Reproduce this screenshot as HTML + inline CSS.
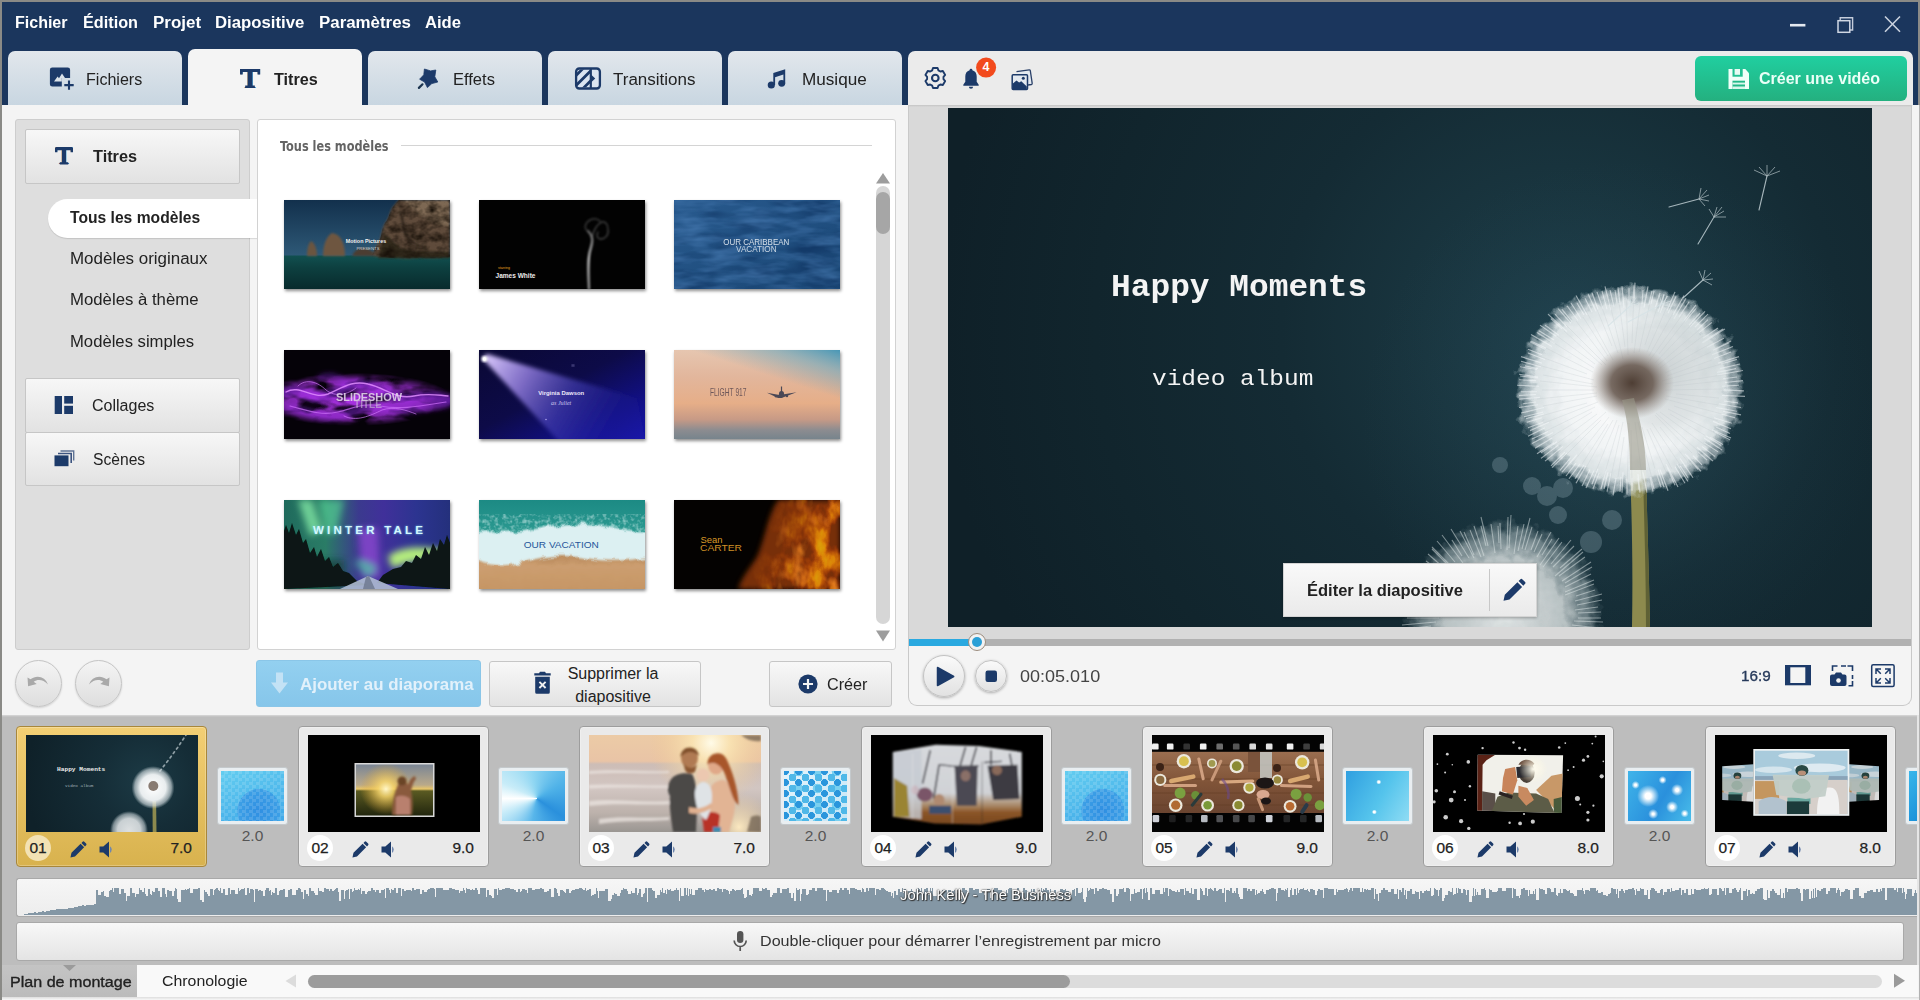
<!DOCTYPE html>
<html lang="fr">
<head>
<meta charset="utf-8">
<title>Diaporama</title>
<style>
*{box-sizing:border-box;margin:0;padding:0}
html,body{width:1920px;height:1000px;overflow:hidden}
body{font-family:"Liberation Sans","DejaVu Sans",sans-serif;color:#222;background:#f4f4f4;position:relative}
.abs{position:absolute}
#titlebar{position:absolute;left:0;top:0;width:1920px;height:105px;background:#1b365d}
#edgeL{position:absolute;left:0;top:0;width:1.600px;height:1000px;background:#8a8a86;z-index:50}
#edgeT{position:absolute;left:0;top:0;width:1920px;height:1.500px;background:#8a8a86;z-index:50}
.menu{position:absolute;top:13px;color:#fff;font-weight:bold;font-size:16px;line-height:20px;white-space:nowrap}
.tab{position:absolute;top:51px;height:54px;width:174px;border-radius:7px 7px 0 0;background:linear-gradient(#e2e7ec,#c8d6e1);font-size:16px;color:#222}
.tab.active{top:49px;height:57px;background:#f4f4f4}
.tab span{position:absolute;top:19px;line-height:20px;white-space:nowrap}
.tab.active span{top:21px}
.tab svg{position:absolute}
#main{position:absolute;left:2px;top:105px;width:1918px;height:610px;background:#f4f4f4}

.sbtn{position:absolute;left:25px;width:215px;border:1px solid #c6c6c6;background:linear-gradient(#f7f7f7,#e2e2e2);border-radius:2px;font-size:16px}
.sbtn span{position:absolute;line-height:20px;white-space:nowrap}
.sitem{position:absolute;left:70px;font-size:16px;line-height:20px;color:#222;white-space:nowrap}
.thumb{position:absolute;width:166px;height:89px;box-shadow:1px 2px 3px rgba(0,0,0,.45);overflow:hidden}
.thumb svg{position:absolute;left:0;top:0}
.btn{position:absolute;top:661px;height:46px;border:1px solid #c6c6c6;border-radius:3px;background:linear-gradient(#f8f8f8,#e3e3e3);font-size:16px;color:#222}

.card{position:absolute;top:726px;width:191px;height:141px;border:1px solid #9d9d9d;border-radius:4px;background:#eaeaea;box-shadow:0 0 0 1px rgba(255,255,255,.25) inset}
.card.sel{background:linear-gradient(#f3cf74,#d8b24e);border-color:#a8873a}
.card .th{position:absolute;left:9px;top:8px;width:172px;height:97px;overflow:hidden;background:#000}
.card .num{position:absolute;left:8px;top:108px;width:26px;height:26px;border-radius:50%;background:#fff;text-align:center;font-size:15.500px;line-height:26px;color:#222;-webkit-text-stroke:.25px #222}
.card.sel .num{background:#f3e2b4}
.card .dur{position:absolute;right:14px;top:111px;font-size:15.500px;line-height:20px;color:#222;-webkit-text-stroke:.25px #222}
.card svg.ic{position:absolute;left:50px;top:111px}
.tr{position:absolute;top:767px;width:71px;height:58px;border:1px solid #c4c9cc;border-radius:3px;background:#e9eef1}
.tr i{position:absolute;left:3px;top:3px;right:3px;bottom:3px;display:block}
.trl{position:absolute;top:826px;width:71px;text-align:center;font-size:15.500px;line-height:20px;color:#555}
</style>
</head>
<body>
<div id="titlebar"></div>
<div id="edgeL"></div><div id="edgeT"></div>

<!-- MENU -->
<div class="menu" style="left:15.0px;transform-origin:0 50%;transform:scaleX(1.001)" id="mn1">Fichier</div>
<div class="menu" style="left:82.5px;transform-origin:0 50%;transform:scaleX(1.014)" id="mn2">Édition</div>
<div class="menu" style="left:152.5px;transform-origin:0 50%;transform:scaleX(1.059)" id="mn3">Projet</div>
<div class="menu" style="left:215.0px;transform-origin:0 50%;transform:scaleX(1.046)" id="mn4">Diapositive</div>
<div class="menu" style="left:318.5px;transform-origin:0 50%;transform:scaleX(1.055)" id="mn5">Paramètres</div>
<div class="menu" style="left:424.5px;transform-origin:0 50%;transform:scaleX(1.038)" id="mn6">Aide</div>

<!-- TABS -->
<div class="tab" style="left:8px"><span id="tb1" style="left:78.3px;transform-origin:0 50%;transform:scaleX(1.004)">Fichiers</span></div>
<div class="tab active" style="left:188px"><span id="tb2" style="left:85.8px;font-weight:bold;transform-origin:0 50%;transform:scaleX(1.011)">Titres</span></div>
<div class="tab" style="left:368px"><span id="tb3" style="left:85.1px;transform-origin:0 50%;transform:scaleX(1.031)">Effets</span></div>
<div class="tab" style="left:548px"><span id="tb4" style="left:64.5px;transform-origin:0 50%;transform:scaleX(1.062)">Transitions</span></div>
<div class="tab" style="left:728px"><span id="tb5" style="left:73.5px;transform-origin:0 50%;transform:scaleX(1.071)">Musique</span></div>


<!-- TAB ICONS -->
<svg class="abs" style="left:48px;top:65px" width="28" height="27" viewBox="48 65 28 27">
 <path d="M52.3 67.4h15.4a2.4 2.4 0 0 1 2.4 2.4v8.2h-8.3v8.6h-9.5a2.4 2.4 0 0 1-2.4-2.4v-14.4a2.4 2.4 0 0 1 2.4-2.4z" fill="#1c3a69"/>
 <path d="M54 81.6l3.6-5 1.4 1.7 3-4.8 3 4.5h-3.2v3.6z" fill="#dbe3ea"/>
 <path d="M69 80.4v9.4M64.3 85.1h9.4" stroke="#1c3a69" stroke-width="2.1" fill="none"/>
</svg>
<div class="abs" id="tabT" style="left:239px;top:63px;width:22px;height:30px;font-family:'Liberation Serif',serif;font-weight:bold;font-size:29.5px;line-height:30px;color:#1c3a69;text-align:center">T</div>
<svg class="abs" style="left:415px;top:65px" width="28" height="27" viewBox="415 65 28 27">
 <path d="M424.4 69l6.2 1.9 5.2-.9-1 6.8 3 5.2-6 1.6-4.4 4-2.8-5.6-5-2.8 4.2-4.4z" fill="#1c3a69" stroke="#1c3a69" stroke-width="0.8" stroke-linejoin="round"/>
 <path d="M418.9 87.9l3.6-3.6" stroke="#1c3550" stroke-width="2.2" stroke-linecap="round"/>
</svg>
<svg class="abs" style="left:573px;top:65px" width="30" height="27" viewBox="573 65 30 27">
 <defs><clipPath id="trc"><rect x="577" y="69.5" width="13.5" height="18"/></clipPath></defs>
 <rect x="577" y="69.5" width="22" height="18" fill="#dbe5f1"/>
 <g clip-path="url(#trc)" stroke="#1c3a69" stroke-width="2.700">
  <path d="M574 77.500l10-10M574 87.500l20-20M582 89.500l12-12"/>
 </g>
 <path d="M590.8 69v19" stroke="#1c3a69" stroke-width="2.2"/>
 <path d="M591 74.5l4.2 4-4.2 4z" fill="#1c3a69"/>
 <rect x="576.1" y="68.5" width="23.8" height="20" rx="3.2" fill="none" stroke="#1c3a69" stroke-width="2.3"/>
</svg>
<svg class="abs" style="left:764px;top:66px" width="26" height="26" viewBox="764 66 26 26">
 <ellipse cx="771.3" cy="85.1" rx="3.6" ry="3.5" fill="#1c3a69"/>
 <ellipse cx="781.7" cy="83.3" rx="3.5" ry="3.4" fill="#1c3a69"/>
 <path d="M773.3 72.9l11.9-3.7v14h-1.8v-8.6l-8.3 2.6v7.9h-1.8z" fill="#1c3a69"/>
</svg>
<div id="main"></div>

<svg class="abs" style="left:238px;top:66px" width="24" height="24" viewBox="238 66 24 24"><path d="M240 69h20.2v5.4h-2.7v-2.3h-14.8v2.3h-2.7zM245.2 85.5h9.6v2.5h-9.6zM247.6 70h4.8v17h-4.8z" fill="#1c3a69"/></svg>
<!-- WINDOW CONTROLS -->
<svg class="abs" style="left:1780px;top:10px" width="130" height="30" viewBox="1780 10 130 30">
 <path d="M1790 25.2h15.4" stroke="#e4e9f0" stroke-width="2.6"/>
 <path d="M1840.2 20.4v-2.6h12.4v12.2h-2.6" stroke="#c4ccdb" stroke-width="1.4" fill="none"/>
 <rect x="1838" y="20.7" width="11.8" height="11.6" fill="none" stroke="#d0d7e3" stroke-width="1.5"/>
 <path d="M1885 16.5l15 15.2M1900 16.5l-15 15.2" stroke="#c9d1de" stroke-width="1.6"/>
</svg>
<div class="abs" style="left:1918.200px;top:0;width:1.800px;height:105px;background:#8b8b88;z-index:50"></div><div class="abs" style="left:1918.600px;top:105px;width:1.400px;height:895px;background:#b2b2b2;z-index:50"></div>

<!-- RIGHT TOP PANEL -->
<div class="abs" style="left:908px;top:51px;width:1005px;height:55px;background:#ebebeb;border-radius:7px 7px 0 0"></div>
<svg class="abs" style="left:922px;top:55px" width="120" height="40" viewBox="922 55 120 40">
 <g transform="translate(935.3 78)" fill="none" stroke="#1c3a69" stroke-width="2.1" stroke-linejoin="round">
  <path id="gearp" d="M-2.6 -9.9h5.2l.9 2.7 2.2 1.3 2.8-.6 2.6 4.5-1.9 2.1v2.6l1.9 2.1-2.6 4.5-2.8-.6-2.2 1.3-.9 2.7h-5.2l-.9-2.7-2.2-1.3-2.8.6-2.6-4.5 1.9-2.1v-2.6l-1.9-2.1 2.6-4.5 2.8.6 2.2-1.3z" transform="scale(.89) translate(0 -1.4)"/>
  <circle cx="0" cy="0" r="3.300"/>
 </g>
 <path d="M969.6 70.2a1.4 1.4 0 0 1 2.8 0c3 .8 4.300 3.300 4.300 6.300v5.200l2 3.100v.9h-15.400v-.9l2-3.100v-5.200c0-3 1.300-5.500 4.300-6.300zM968.900 86.700h4.200a2.100 2.100 0 0 1-4.200 0z" fill="#1c3a69"/>
 <circle cx="986.1" cy="67.600" r="10" fill="#f24a1d"/>
 <g>
  <path d="M1016.500 71.600l12.700-1.800a1 1 0 0 1 1.100.8l1.900 12.800a1 1 0 0 1-.8 1.100l-3.300.500" fill="#e3e9f0" stroke="#2a4068" stroke-width="1.300"/>
  <rect x="1012.200" y="74.800" width="15.300" height="14.800" rx="1" fill="#e3e9f0" stroke="#1c3a69" stroke-width="1.500"/>
  <path d="M1012.900 83.500l3.600-3.100 2.600 2.200 2.200-1.400 5.500 5.200v2.500h-13.900z" fill="#1c3a69"/>
  <circle cx="1023.300" cy="78.200" r="1.500" fill="#1c3a69"/>
 </g>
</svg>
<div class="abs" style="left:976px;top:58px;width:20px;height:19px;line-height:19px;text-align:center;color:#fff;font-weight:bold;font-size:12.500px">4</div>
<div class="abs" style="left:1695px;top:56px;width:212px;height:45px;border-radius:6px;background:linear-gradient(#20cfa0,#24b07f)"></div>
<svg class="abs" style="left:1726px;top:66px" width="26" height="26" viewBox="1726 66 26 26">
 <path d="M1728.500 69h16.800l3.700 4.300v15.700h-20.500z" fill="#f0fff9"/>
 <rect x="1732.500" y="69" width="10.200" height="7.700" fill="#22c193"/>
 <rect x="1734.600" y="69" width="5.400" height="5.800" fill="#e8fbf4"/>
 <rect x="1732.500" y="80.700" width="12.500" height="8.300" fill="#22b888"/>
 <rect x="1732.500" y="82.600" width="12.500" height="1.900" fill="#d8f7ec"/>
 <rect x="1732.500" y="86.500" width="12.500" height="2.500" fill="#d8f7ec"/>
</svg>
<div class="abs" id="creer" style="left:1759.0px;top:69px;line-height:20px;font-size:16px;font-weight:bold;color:#eafff7;white-space:nowrap;transform-origin:0 50%;transform:scaleX(1.001)">Créer une vidéo</div>

<!-- LEFT SIDEBAR -->
<div class="abs" style="left:15px;top:119px;width:235px;height:531px;background:#dedede;border:1px solid #cdcdcd;border-radius:3px"></div>
<div class="sbtn" style="top:129px;height:55px"><span style="left:66.5px;top:17px;font-weight:bold;transform-origin:0 50%;transform:scaleX(1.017)" id="sb1">Titres</span></div>
<div class="abs" style="left:53px;top:142px;width:22px;height:28px;font-family:'Liberation Serif',serif;font-weight:bold;font-size:26px;line-height:28px;color:#1c3a69;text-align:center">T</div>
<svg class="abs" style="left:53px;top:145px" width="22" height="22" viewBox="53 145 22 22"><path d="M55 147.400h18v4.800h-2.400v-2h-13.200v2h-2.400zM59.800 162.200h8.400v2.300h-8.400zM61.900 148h4.200v15.500h-4.200z" fill="#1c3a69"/></svg>
<div class="abs" style="left:48px;top:199px;width:212px;height:39px;background:#fff;border-radius:19.500px 0 0 19.500px;box-shadow:0 1px 1px rgba(0,0,0,.12)"></div>
<div class="sitem" style="top:208px;font-weight:bold;z-index:3;left:70.0px;transform-origin:0 50%;transform:scaleX(0.978)" id="si1">Tous les modèles</div>
<div class="sitem" style="top:249px;left:70.0px;transform-origin:0 50%;transform:scaleX(1.059)" id="si2">Modèles originaux</div>
<div class="sitem" style="top:290px;left:70.0px;transform-origin:0 50%;transform:scaleX(1.047)" id="si3">Modèles à thème</div>
<div class="sitem" style="top:331.500px;left:70.0px;transform-origin:0 50%;transform:scaleX(1.041)" id="si4">Modèles simples</div>
<div class="sbtn" style="top:378px;height:55px"><span style="left:66.0px;top:17px;transform-origin:0 50%;transform:scaleX(1.001)" id="sb2">Collages</span></div>
<div class="sbtn" style="top:432px;height:54px"><span style="left:67.1px;top:17px;transform-origin:0 50%;transform:scaleX(0.978)" id="sb3">Scènes</span></div>
<svg class="abs" style="left:52px;top:394px" width="24" height="22" viewBox="52 394 24 22">
 <rect x="54.700" y="396" width="7.300" height="18" fill="#1c3a69"/><rect x="64.200" y="396" width="8.800" height="7.600" fill="#1c3a69"/><rect x="64.200" y="405.800" width="8.800" height="8.200" fill="#1c3a69"/>
</svg>
<svg class="abs" style="left:52px;top:448px" width="24" height="22" viewBox="52 448 24 22">
 <path d="M60.500 451h13.200v9.500" fill="none" stroke="#5f7395" stroke-width="1.400"/>
 <path d="M58 453.500h13.200v9.500" fill="none" stroke="#3c5480" stroke-width="1.600"/>
 <rect x="54.500" y="455.400" width="14" height="10.800" fill="#1c3a69"/>
</svg>
<!-- undo redo -->
<div class="abs" style="left:15px;top:660px;width:47px;height:47px;border-radius:50%;border:1px solid #c4c4c4;background:linear-gradient(#f4f4f4,#dedede);box-shadow:0 1px 2px rgba(0,0,0,.15)"></div>
<div class="abs" style="left:75px;top:660px;width:47px;height:47px;border-radius:50%;border:1px solid #c4c4c4;background:linear-gradient(#f4f4f4,#dedede);box-shadow:0 1px 2px rgba(0,0,0,.15)"></div>
<svg class="abs" style="left:15px;top:660px" width="110" height="48" viewBox="15 660 110 48">
 <path d="M27.500 677.500l.6 8.800 8.600-2.300-3-2.300c4-2.800 9.500-2.400 14.300 2.800-2.300-7.400-11-10.500-17.500-5.200z" fill="#a9a9a9"/>
 <path d="M109.500 677.500l-.6 8.800-8.600-2.300 3-2.300c-4-2.800-9.500-2.400-14.300 2.800 2.300-7.400 11-10.500 17.500-5.200z" fill="#a9a9a9"/>
</svg>

<!-- CONTENT PANEL -->
<div class="abs" style="left:257px;top:119px;width:639px;height:531px;background:#fff;border:1px solid #d2d2d2;border-radius:3px;z-index:2"></div>
<div class="abs" style="left:258px;top:199px;width:3px;height:39px;background:#fff;z-index:3"></div>
<div class="abs" id="hdr" style="z-index:4;left:279.5px;top:136px;line-height:20px;font-size:14.6px;font-weight:bold;color:#636363;white-space:nowrap;font-family:'DejaVu Sans Condensed','Liberation Sans',sans-serif;transform-origin:0 50%;transform:scaleX(0.863)">Tous les modèles</div>
<div class="abs" style="z-index:4;left:401px;top:145px;width:471px;height:1px;background:#d4d4d4"></div>
<!-- scrollbar -->
<div class="abs" style="z-index:4;left:876px;top:186px;width:14px;height:438px;border-radius:7px;background:#d6d6d6"></div>
<div class="abs" style="z-index:5;left:876px;top:192px;width:14px;height:42px;border-radius:7px;background:#a6a6a6"></div>
<svg class="abs" style="z-index:5;left:874px;top:170px" width="18" height="476" viewBox="874 170 18 476"><path d="M876 183.500h14l-7-10.500z" fill="#9d9d9d"/><path d="M876 630.500h14l-7 11z" fill="#9d9d9d"/></svg>
<div class="thumb" style="z-index:4;left:284px;top:200px"><svg width="166" height="89" viewBox="0 0 166 89"><defs><linearGradient id="t1s" x1="0" y1="0" x2="0" y2="1"><stop offset="0" stop-color="#12304c"/><stop offset="1" stop-color="#2f5a78"/></linearGradient><linearGradient id="t1w" x1="0" y1="0" x2="0" y2="1"><stop offset="0" stop-color="#115050"/><stop offset=".35" stop-color="#0d4040"/><stop offset="1" stop-color="#082a2c"/></linearGradient><filter id="b1"><feGaussianBlur stdDeviation=".8"/></filter><filter id="n1" color-interpolation-filters="sRGB" x="0" y="0" width="100%" height="100%"><feTurbulence type="fractalNoise" baseFrequency=".09 .12" numOctaves="3" seed="8"/><feColorMatrix values="0 0 0 0 .1  0 0 0 0 .07  0 0 0 0 .04  1.800 0 0 0 -.600"/><feComposite in2="SourceGraphic" operator="in"/></filter></defs>
<rect width="166" height="57" fill="url(#t1s)"/><rect y="55.500" width="166" height="34" fill="url(#t1w)"/>
<g filter="url(#b1)"><path id="rk1" d="M88 56c3-7 5-12 8-17 2-6 2-11 5-16 3-3 4-8 6-13 2-4 5-7 8-10h51v57c-10 2-20 1-30 1-16 1-32 0-48-2z" fill="#5e4c3b"/><path d="M120 0c6 8 12 10 18 16 8 6 16 8 28 10v-26z" fill="#7d6852"/><path d="M100 34c6 2 10 10 18 14 12 4 26 2 48 4v6h-72z" fill="#33291f"/><path d="M116 12c4 8 2 18 8 26 4 6 12 8 18 10" stroke="#2a2018" stroke-width="3" fill="none" opacity=".7"/>
<path d="M23 56c0-6 1-12 4-15 4 2 6 8 6 15z" fill="#6b543f"/><path d="M39 56c0-8 2-19 9-23 8 1 13 9 13 23z" fill="#6e5640"/><path d="M68 56c2-5 6-8 12-8 6 1 10 4 12 8z" fill="#4b3d31"/></g>
<use href="#rk1" filter="url(#n1)"/>
<text x="82" y="42.800" text-anchor="middle" font-family="Liberation Sans,sans-serif" font-weight="bold" font-size="5.400" fill="#f1f1f1">Motion Pictures</text><text x="84" y="49.500" text-anchor="middle" font-family="Liberation Sans,sans-serif" font-size="4.300" fill="#cfcfcf">PRESENTS</text></svg></div>
<div class="thumb" style="z-index:4;left:479px;top:200px"><svg width="166" height="89" viewBox="0 0 166 89"><defs><filter id="b2" x="-50%" y="-20%" width="200%" height="140%"><feGaussianBlur stdDeviation="1.100"/></filter><linearGradient id="sm2" x1="0" y1="1" x2="0" y2="0"><stop offset="0" stop-color="#d8d8d8" stop-opacity=".7"/><stop offset=".5" stop-color="#f0f0f0" stop-opacity=".9"/><stop offset="1" stop-color="#b0b0b0" stop-opacity=".6"/></linearGradient></defs><rect width="166" height="89" fill="#020202"/>
<g filter="url(#b2)" fill="none" stroke-linecap="round"><path d="M110 89c-.5-14-1.500-26 .5-36 1.500-7 3.500-10 2.500-15-.5-3-2-5-4-7" stroke="url(#sm2)" stroke-width="2.200"/><path d="M113 38c1-7 5-14 10-16 4-1 6 3 6 8 1 5-3 9-7 9-4 0-5-4-3-7" stroke="#8c8c8c" stroke-width="1.300" opacity=".5"/><path d="M107 30c-2-4 0-8 4-10 4-2 8-1 10 1" stroke="#5c5c5c" stroke-width="1.600" opacity=".6"/></g>
<text x="19" y="68.800" font-family="Liberation Sans,sans-serif" font-size="3.600" fill="#e6a020">starring</text><text x="16.500" y="77.800" font-family="Liberation Sans,sans-serif" font-weight="bold" font-size="6.600" fill="#ececec" textLength="40" lengthAdjust="spacingAndGlyphs">James White</text></svg></div>
<div class="thumb" style="z-index:4;left:674px;top:200px"><svg width="166" height="89" viewBox="0 0 166 89"><defs><filter id="w3" color-interpolation-filters="sRGB" x="0" y="0" width="100%" height="100%"><feTurbulence type="fractalNoise" baseFrequency=".03 .11" numOctaves="3" seed="5"/><feColorMatrix values="0 0 0 0 .3  0 0 0 0 .5  0 0 0 0 .72  0 0 0 -2.200 1.400"/></filter><filter id="w3b" color-interpolation-filters="sRGB" x="0" y="0" width="100%" height="100%"><feTurbulence type="fractalNoise" baseFrequency=".025 .09" numOctaves="2" seed="9"/><feColorMatrix values="0 0 0 0 .06  0 0 0 0 .2  0 0 0 0 .38  0 0 0 2.200 -.900"/></filter><linearGradient id="t3" x1="0" y1="0" x2="1" y2="1"><stop offset="0" stop-color="#285a8e"/><stop offset="1" stop-color="#1a4674"/></linearGradient></defs><rect width="166" height="89" fill="url(#t3)"/><rect width="166" height="89" filter="url(#w3b)" opacity=".7"/><rect width="166" height="89" filter="url(#w3)" opacity=".55"/>
<text x="82.300" y="44.500" text-anchor="middle" font-family="Liberation Sans,sans-serif" font-size="9.500" fill="#e4ebf2" opacity=".92" textLength="66" lengthAdjust="spacingAndGlyphs">OUR CARIBBEAN</text><text x="82.300" y="51.800" text-anchor="middle" font-family="Liberation Sans,sans-serif" font-size="9.500" fill="#e4ebf2" opacity=".85" textLength="40.500" lengthAdjust="spacingAndGlyphs">VACATION</text></svg></div>
<div class="thumb" style="z-index:4;left:284px;top:350px"><svg width="166" height="89" viewBox="0 0 166 89"><defs><filter id="b4" x="-10%" y="-30%" width="120%" height="160%"><feGaussianBlur stdDeviation="2.600"/></filter><filter id="b4b"><feGaussianBlur stdDeviation=".7"/></filter><filter id="n4" color-interpolation-filters="sRGB" x="0" y="0" width="100%" height="100%"><feTurbulence type="fractalNoise" baseFrequency=".035 .08" numOctaves="3" seed="21"/><feColorMatrix values="0 0 0 0 .68  0 0 0 0 .2  0 0 0 0 .92  0 3.400 0 0 -1.100"/><feComposite in2="SourceGraphic" operator="in"/></filter><radialGradient id="gm4" cx=".42" cy=".55" r=".6" gradientTransform="translate(0 .28) scale(1 .5)"><stop offset="0" stop-color="#fff"/><stop offset=".7" stop-color="#fff" stop-opacity=".7"/><stop offset="1" stop-color="#fff" stop-opacity="0"/></radialGradient></defs><rect width="166" height="89" fill="#050208"/>
<g fill="none" stroke-linecap="round" filter="url(#b4)"><path d="M0 44c14-10 26 8 44 2 14-6 24-14 40-10 18 4 28 16 46 12 14-3 24-2 36 2" stroke="#7a24c6" stroke-width="10" opacity=".75"/><path d="M4 58c16 2 30 10 48 8 16-2 30-12 46-8 20 4 40 0 64-4" stroke="#6a1fb0" stroke-width="8" opacity=".65"/><path d="M36 28c10-6 20 0 28 6" stroke="#6a22b8" stroke-width="5" opacity=".5"/></g>
<rect width="166" height="89" fill="url(#gm4)" filter="url(#n4)"/>
<g fill="none" stroke-linecap="round" filter="url(#b4b)"><path d="M2 42c14-8 26 8 42 2 14-6 24-14 40-10 18 4 28 16 46 12 14-3 22-1 34 0" stroke="#e08cff" stroke-width="1.400" opacity=".85"/><path d="M6 56c16 4 30 10 48 6 14-3 26-10 42-6 20 4 40 0 66-4" stroke="#c96cf5" stroke-width="1.200" opacity=".75"/><path d="M14 36c8-8 20-4 28 4 10 8 22 4 30-2M60 66c12 6 26 0 38-6 12-4 24 0 34 4" stroke="#d77cff" stroke-width="1" opacity=".65"/></g>
<text x="85" y="50.700" text-anchor="middle" font-family="Liberation Sans,sans-serif" font-weight="bold" font-size="11" fill="#e6dcec" opacity=".85" textLength="66" lengthAdjust="spacingAndGlyphs">SLIDESHOW</text><text x="84" y="58.400" text-anchor="middle" font-family="Liberation Sans,sans-serif" font-weight="bold" font-size="10" fill="#cdbfd6" opacity=".6" textLength="28" lengthAdjust="spacingAndGlyphs">TITLE</text></svg></div>
<div class="thumb" style="z-index:4;left:479px;top:350px"><svg width="166" height="89" viewBox="0 0 166 89"><defs><linearGradient id="t5" x1="0" y1="0" x2="1" y2="1"><stop offset="0" stop-color="#0a0834"/><stop offset=".45" stop-color="#0d0b48"/><stop offset=".8" stop-color="#12108a"/><stop offset="1" stop-color="#1513a8"/></linearGradient><linearGradient id="t5b" gradientUnits="userSpaceOnUse" x1="5" y1="9" x2="135" y2="85"><stop offset="0" stop-color="#dccbff" stop-opacity=".98"/><stop offset=".3" stop-color="#9a84e6" stop-opacity=".8"/><stop offset=".6" stop-color="#4c46c0" stop-opacity=".6"/><stop offset="1" stop-color="#2222a8" stop-opacity=".15"/></linearGradient><filter id="b5" x="-10%" y="-10%" width="120%" height="120%"><feGaussianBlur stdDeviation="2"/></filter><filter id="b5s"><feGaussianBlur stdDeviation=".8"/></filter></defs><rect width="166" height="89" fill="url(#t5)"/>
<path d="M3 8l5-4 150 44 10 50h-82z" fill="url(#t5b)" filter="url(#b5)"/><circle cx="5.500" cy="9" r="3" fill="#fff" filter="url(#b5s)"/><circle cx="5.500" cy="9" r="1.700" fill="#fff"/><circle cx="94" cy="15.500" r="1" fill="#b9b0ee" filter="url(#b5s)"/><circle cx="67" cy="69.500" r=".8" fill="#a9a0e8"/>
<text x="82.200" y="44.500" text-anchor="middle" font-family="Liberation Sans,sans-serif" font-weight="bold" font-size="5.200" fill="#ece8fa" textLength="46" lengthAdjust="spacingAndGlyphs">Virginia Dawson</text><text x="82.200" y="54.500" text-anchor="middle" font-family="Liberation Serif,serif" font-style="italic" font-size="6" fill="#cfc8f0">as Juliet</text></svg></div>
<div class="thumb" style="z-index:4;left:674px;top:350px"><svg width="166" height="89" viewBox="0 0 166 89"><defs><linearGradient id="t6" x1="0" y1="0" x2="0" y2="1"><stop offset="0" stop-color="#e6c6b0"/><stop offset=".3" stop-color="#e2b69c"/><stop offset=".6" stop-color="#e6ae88"/><stop offset=".78" stop-color="#c79a86"/><stop offset=".9" stop-color="#8c8c90"/><stop offset="1" stop-color="#77848c"/></linearGradient><linearGradient id="t6b" x1=".1" y1="1" x2="1" y2="0"><stop offset=".55" stop-color="#6fa3b8" stop-opacity="0"/><stop offset=".8" stop-color="#6aa6bc" stop-opacity=".6"/><stop offset="1" stop-color="#4496b6" stop-opacity=".98"/></linearGradient></defs><rect width="166" height="89" fill="url(#t6)"/><rect width="166" height="60" fill="url(#t6b)"/>
<text x="36" y="46.400" font-family="Liberation Sans,sans-serif" font-size="11.500" fill="#5a4850" opacity=".85" textLength="36.500" lengthAdjust="spacingAndGlyphs">FLIGHT 917</text>
<g fill="#4a4856"><path d="M93 42.800l12.500 2.200 17-2.800-15 5.800h-3.500z"/><ellipse cx="107.500" cy="44.300" rx="2.600" ry="3.200"/><path d="M106.900 36.500h1.200v6h-1.200z"/><circle cx="102" cy="46.300" r="1.200"/><circle cx="113" cy="46" r="1.200"/></g></svg></div>
<div class="thumb" style="z-index:4;left:284px;top:500px"><svg width="166" height="89" viewBox="0 0 166 89"><defs><linearGradient id="t7" x1="0" y1="0" x2="1" y2="0"><stop offset="0" stop-color="#1f6a5c"/><stop offset=".25" stop-color="#2a7c66"/><stop offset=".45" stop-color="#3b3a8e"/><stop offset=".6" stop-color="#40309a"/><stop offset=".8" stop-color="#2c3490"/><stop offset="1" stop-color="#24307c"/></linearGradient><filter id="b7" x="-20%" y="-20%" width="140%" height="140%"><feGaussianBlur stdDeviation="3.500"/></filter><filter id="b7b"><feGaussianBlur stdDeviation=".5"/></filter><filter id="b7t" x="-10%" y="-50%" width="120%" height="200%"><feGaussianBlur stdDeviation=".9"/></filter></defs><rect width="166" height="89" fill="url(#t7)"/>
<g filter="url(#b7)"><path d="M14 0l14 0 10 30-12 6z" fill="#7fe6a4" opacity=".8"/><path d="M34 0h26l-8 34h-10z" fill="#58d498" opacity=".65"/><path d="M74 28l20 0 2 50h-18z" fill="#8646cc" opacity=".85"/><path d="M104 56c14-10 34-10 56-6l-2 10c-18-2-34 2-50 8z" fill="#b8f27c" opacity=".98"/><path d="M70 62c8-4 16 0 24 6l-10 10z" fill="#4ad0a0" opacity=".7"/><path d="M0 60h60v29h-60z" fill="#123a34" opacity=".7"/></g>
<g fill="#081512" filter="url(#b7b)"><path d="M0 89v-58l2-6 3 8 3-10 4 12 3-6 4 14 3-4 4 14 4-6 3 10 4-8 4 12 4-4 4 10 5-4 5 8 6 2 8 8 10 4z"/><path d="M166 89v-46l-3-8-3 10-4-6-3 12-4-8-4 12-4-8-4 12-5-4-4 8-6-2-5 6-8 2-10 6-6 8z"/></g>
<path d="M56 89l28-13 30 13z" fill="#aebbd2" opacity=".9"/><path d="M82 77l3-1 6 13h-12z" fill="#5a6478" opacity=".6"/>
<text x="84" y="34" text-anchor="middle" font-family="Liberation Sans,sans-serif" font-weight="bold" font-size="11.500" fill="#7fd8f4" opacity=".8" textLength="110" lengthAdjust="spacing" filter="url(#b7t)">WINTER TALE</text><text x="84" y="34" text-anchor="middle" font-family="Liberation Sans,sans-serif" font-weight="bold" font-size="11.500" fill="#d4f8ff" textLength="110" lengthAdjust="spacing">WINTER TALE</text></svg></div>
<div class="thumb" style="z-index:4;left:479px;top:500px"><svg width="166" height="89" viewBox="0 0 166 89"><defs><linearGradient id="t8" x1="0" y1="0" x2="0" y2="1"><stop offset="0" stop-color="#1c8a84"/><stop offset="1" stop-color="#45b4a6"/></linearGradient><linearGradient id="t8s" x1="0" y1="0" x2="0" y2="1"><stop offset="0" stop-color="#b98a5c"/><stop offset=".25" stop-color="#cc9e70"/><stop offset="1" stop-color="#c49462"/></linearGradient><filter id="f8" x="-5%" y="-20%" width="110%" height="140%"><feTurbulence type="fractalNoise" baseFrequency=".09" numOctaves="2" seed="3"/><feDisplacementMap in="SourceGraphic" scale="8" xChannelSelector="R" yChannelSelector="G"/></filter><filter id="b8"><feGaussianBlur stdDeviation=".9"/></filter><filter id="n8" color-interpolation-filters="sRGB" x="0" y="0" width="100%" height="100%"><feTurbulence type="fractalNoise" baseFrequency=".25" numOctaves="2" seed="2"/><feColorMatrix values="0 0 0 0 .9  0 0 0 0 .97  0 0 0 0 .97  0 0 2.500 0 -1.100"/></filter></defs><rect width="166" height="89" fill="url(#t8)"/>
<rect y="14" width="166" height="24" filter="url(#n8)" opacity=".5"/>
<g filter="url(#f8)"><path d="M-10 36c20-8 40-2 60-6 24-4 40-8 60-6 22 2 40 10 66 8v60h-186z" fill="#dcf0f2" filter="url(#b8)"/><path d="M-10 58c18 8 34 10 54 4 22-6 40-8 62-4 20 4 42 4 70-2v40h-186z" fill="url(#t8s)" filter="url(#b8)"/></g>
<text x="82.300" y="47.800" text-anchor="middle" font-family="Liberation Sans,sans-serif" font-size="9.800" fill="#26569a" textLength="75" lengthAdjust="spacingAndGlyphs">OUR VACATION</text></svg></div>
<div class="thumb" style="z-index:4;left:674px;top:500px"><svg width="166" height="89" viewBox="0 0 166 89"><defs><filter id="n9" color-interpolation-filters="sRGB" x="0" y="0" width="100%" height="100%"><feTurbulence type="fractalNoise" baseFrequency=".045 .028" numOctaves="4" seed="14"/><feColorMatrix values="0 0 0 0 .86  .9 0 0 0 -.1  0 0 0 0 .03  3.400 0 0 0 -1.300"/><feComposite in2="SourceGraphic" operator="in"/></filter><filter id="n9b" color-interpolation-filters="sRGB" x="0" y="0" width="100%" height="100%"><feTurbulence type="fractalNoise" baseFrequency=".06 .035" numOctaves="3" seed="31"/><feColorMatrix values="0 0 0 0 .96  0 0 0 0 .55  0 0 0 0 .14  4 0 0 0 -2.200"/><feComposite in2="SourceGraphic" operator="in"/></filter><linearGradient id="m9" gradientUnits="userSpaceOnUse" x1="85" y1="45" x2="135" y2="65"><stop offset="0" stop-color="#fff" stop-opacity="0"/><stop offset=".5" stop-color="#fff" stop-opacity=".6"/><stop offset="1" stop-color="#fff"/></linearGradient><filter id="b9"><feGaussianBlur stdDeviation="2.500"/></filter></defs><rect width="166" height="89" fill="#040201"/>
<path d="M64 89c6-18 18-26 22-40 6-16 8-34 18-49h62v89z" fill="#a8420a" opacity=".7" filter="url(#b9)"/>
<rect x="50" width="116" height="89" fill="url(#m9)" filter="url(#n9)"/><rect x="50" width="116" height="89" fill="url(#m9)" filter="url(#n9b)" opacity=".8"/>
<text x="26.400" y="43" font-family="Liberation Sans,sans-serif" font-size="8.800" fill="#dc9c28" textLength="22" lengthAdjust="spacingAndGlyphs">Sean</text><text x="26" y="50.700" font-family="Liberation Sans,sans-serif" font-size="9.400" fill="#cf9026" textLength="42" lengthAdjust="spacingAndGlyphs">CARTER</text></svg></div>
<!-- buttons -->
<div class="abs" style="left:256px;top:660px;width:225px;height:47px;border-radius:3px;background:linear-gradient(#93d0f0,#86c6ea);border:1px solid #8ac6e8"></div>
<svg class="abs" style="left:268px;top:670px" width="24" height="28" viewBox="268 670 24 28"><path d="M276 672.500h7v10h5l-8.500 11-8.500-11h5z" fill="#c3e2f5"/></svg>
<div class="abs" id="ajout" style="left:300.4px;top:675px;line-height:20px;font-size:16px;font-weight:bold;color:#e2f1fb;white-space:nowrap;transform-origin:0 50%;transform:scaleX(1.055)">Ajouter au diaporama</div>
<div class="btn" style="left:489px;width:212px"></div>
<div class="abs" id="supp" style="left:548px;top:662px;width:130px;text-align:center;font-size:16px;line-height:23px;padding-top:0px;color:#222">Supprimer la diapositive</div>
<svg class="abs" style="left:532px;top:670px" width="22" height="26" viewBox="532 670 22 26">
 <path d="M535.200 676.800h14.600v15.500a1.500 1.500 0 0 1-1.500 1.500h-11.600a1.500 1.500 0 0 1-1.500-1.500zM534.300 673.200h4.700l1-1.400h5l1 1.400h4.700v2.200h-16.400z" fill="#1c3a69"/>
 <path d="M539.400 681.800l6.200 6.200M545.600 681.800l-6.200 6.200" stroke="#f0f0f0" stroke-width="1.900"/>
</svg>
<div class="btn" style="left:769px;width:123px"></div>
<svg class="abs" style="left:796px;top:672px" width="24" height="24" viewBox="796 672 24 24"><circle cx="808" cy="684" r="9.600" fill="#1c3a69"/><path d="M808 679v10M803 684h10" stroke="#f3f3f3" stroke-width="2.200"/></svg>
<div class="abs" id="creerb" style="left:827.0px;top:675px;line-height:20px;font-size:16px;color:#222;transform-origin:0 50%;transform:scaleX(1.012)">Créer</div>

<!-- PREVIEW PANEL -->
<div class="abs" style="left:908px;top:105px;width:1004px;height:601px;background:#f4f4f4;border:1px solid #c9c9c9;border-top:none;border-radius:0 0 9px 9px"></div>
<div class="abs" style="left:909px;top:105px;width:1002px;height:534px;background:#d9d9d9"></div>
<div class="abs" style="left:909px;top:105px;width:1002px;height:2px;background:linear-gradient(#c4c4c4,#d9d9d9)"></div>
<!-- video -->
<div class="abs" id="video" style="left:948px;top:108px;width:924px;height:519px;overflow:hidden;background:#16303b">
<svg width="924" height="519" viewBox="948 108 924 519" style="position:absolute;left:0;top:0">
 <defs>
  <radialGradient id="vbg" gradientUnits="userSpaceOnUse" cx="1560" cy="330" r="620">
   <stop offset="0" stop-color="#1d3d49"/><stop offset=".22" stop-color="#19353f"/><stop offset=".45" stop-color="#142b34"/><stop offset=".75" stop-color="#11252d"/><stop offset="1" stop-color="#0f2028"/>
  </radialGradient>
  <radialGradient id="puff" cx=".5" cy=".5" r=".5">
   <stop offset="0" stop-color="#fff"/><stop offset=".6" stop-color="#f7f9fa" stop-opacity=".97"/><stop offset=".84" stop-color="#edf2f3" stop-opacity=".9"/><stop offset=".95" stop-color="#d9e3e6" stop-opacity=".5"/><stop offset="1" stop-color="#c0d0d4" stop-opacity="0"/>
  </radialGradient>
  <radialGradient id="puff2" cx=".5" cy=".5" r=".5">
   <stop offset="0" stop-color="#e8ecec" stop-opacity=".95"/><stop offset=".6" stop-color="#d5dcdc" stop-opacity=".85"/><stop offset=".85" stop-color="#b8c6c8" stop-opacity=".5"/><stop offset="1" stop-color="#a8babd" stop-opacity="0"/>
  </radialGradient>
  <radialGradient id="core" cx=".5" cy=".5" r=".5">
   <stop offset="0" stop-color="#4e3e34"/><stop offset=".5" stop-color="#64544a" stop-opacity=".85"/><stop offset="1" stop-color="#8a7c74" stop-opacity="0"/>
  </radialGradient>
  <radialGradient id="shade" cx=".5" cy=".5" r=".5"><stop offset="0" stop-color="#9aa6a8" stop-opacity=".5"/><stop offset=".7" stop-color="#aab6b8" stop-opacity=".28"/><stop offset="1" stop-color="#c0cccc" stop-opacity="0"/></radialGradient><radialGradient id="glow" cx=".5" cy=".5" r=".5">
   <stop offset="0" stop-color="#4a7585" stop-opacity=".22"/><stop offset="1" stop-color="#2a5060" stop-opacity="0"/>
  </radialGradient>
  <filter id="fz" x="-20%" y="-20%" width="140%" height="140%"><feTurbulence type="fractalNoise" baseFrequency=".11" numOctaves="2" seed="4"/><feDisplacementMap in="SourceGraphic" scale="18" xChannelSelector="R" yChannelSelector="G"/></filter>
 </defs>
 <rect x="948" y="108" width="924" height="519" fill="url(#vbg)"/>
 <circle cx="1620" cy="420" r="260" fill="url(#glow)"/>
 <!-- bokeh -->
 <g fill="#9fb8c2" opacity=".28"><circle cx="1532" cy="486" r="9"/><circle cx="1547" cy="496" r="10"/><circle cx="1563" cy="488" r="10"/><circle cx="1558" cy="515" r="9"/><circle cx="1591" cy="542" r="11"/><circle cx="1612" cy="520" r="10"/><circle cx="1500" cy="465" r="8"/></g>
 <!-- stem -->
 <path d="M1630 470c2 50 3 100 2 157h18c-1-57-3-110-4-157z" fill="#8d8a4e"/>
 <path d="M1643 470c1 50 3 100 3 157h4c-1-57-3-110-4-157z" fill="#5f6135"/>
 <!-- main dandelion -->
 <g transform="translate(0 389) scale(1 .925) translate(0 -389)"> <g filter="url(#fz)"><circle cx="1630" cy="390" r="114" fill="url(#puff)"/></g>
 <path d="M1724 390L1744 391M1724 396L1745 397M1722 396L1745 397M1724 402L1738 404M1719 405L1741 409M1716 409L1737 413M1723 413L1741 417M1721 416L1735 420M1714 420L1732 426M1713 424L1731 432M1716 430L1730 437M1712 433L1731 442M1714 435L1730 444M1710 441L1723 449M1705 439L1721 450M1704 442L1722 455M1704 447L1718 457M1702 451L1715 462M1697 452L1713 467M1698 457L1707 466M1693 461L1702 471M1687 461L1701 478M1685 459L1698 476M1680 464L1693 485M1680 472L1688 485M1677 470L1688 489M1675 473L1685 491M1666 470L1678 495M1667 473L1675 493M1660 476L1668 499M1658 476L1664 495M1655 475L1661 495M1651 484L1654 497M1650 484L1653 500M1643 479L1647 501M1638 481L1640 501M1638 485L1639 498M1632 485L1632 499M1627 486L1627 503M1623 479L1622 501M1621 484L1620 500M1616 485L1613 504M1611 480L1607 500M1608 479L1604 497M1606 476L1601 497M1599 480L1593 497M1598 475L1592 492M1594 477L1586 496M1590 476L1582 494M1586 472L1576 491M1584 471L1575 486M1580 470L1569 486M1576 469L1566 483M1577 460L1562 479M1571 463L1560 477M1567 458L1552 474M1565 457L1551 472M1563 451L1545 467M1558 450L1541 464M1557 446L1541 458M1554 447L1537 459M1552 442L1535 453M1553 436L1532 448M1548 435L1532 443M1545 431L1528 440M1549 425L1530 434M1543 425L1528 431M1542 420L1527 425M1544 416L1526 421M1543 414L1524 419M1544 409L1521 415M1538 406L1519 409M1536 403L1523 405M1540 398L1519 400M1536 395L1519 396M1537 392L1521 392M1539 386L1517 385M1536 380L1519 379M1538 377L1520 375M1538 376L1519 373M1537 368L1520 365M1538 367L1525 364M1541 365L1521 359M1542 361L1521 354M1545 357L1528 350M1542 352L1528 346M1545 346L1530 338M1546 345L1531 337M1552 343L1531 330M1555 340L1537 328M1554 336L1539 326M1556 332L1540 320M1559 331L1545 320M1562 324L1551 313M1567 327L1548 308M1567 322L1555 308M1571 318L1558 302M1572 316L1562 303M1578 315L1567 299M1581 313L1571 296M1584 309L1577 296M1587 309L1576 288M1592 306L1585 291M1596 305L1588 286M1598 303L1592 285M1603 303L1597 284M1607 303L1602 283M1611 304L1605 278M1614 300L1610 282M1617 296L1615 282M1620 298L1618 279M1624 301L1622 278M1629 301L1629 280M1633 296L1634 277M1634 296L1635 274M1642 297L1643 282M1644 301L1648 278M1649 298L1652 283M1651 297L1654 283M1655 302L1660 285M1658 306L1664 287M1660 307L1667 288M1667 304L1675 284M1668 307L1676 289M1673 309L1684 288M1674 313L1686 291M1679 311L1689 295M1684 315L1696 298M1685 316L1696 302M1689 320L1700 307M1690 322L1705 305M1695 322L1708 308M1697 325L1708 314M1699 328L1712 317M1703 334L1718 323M1702 339L1723 324M1703 339L1725 324M1707 344L1724 334M1713 347L1731 337M1713 347L1729 339M1712 352L1733 343M1714 356L1731 349M1718 361L1739 354M1721 362L1737 357M1720 367L1740 362M1717 371L1736 367M1717 374L1743 369M1723 378L1737 376M1725 382L1743 380M1722 386L1739 385" stroke="#f4f8f9" stroke-width="1.200" opacity=".55" fill="none"/>
 </g>
 <circle cx="1660" cy="375" r="70" fill="url(#shade)"/>
 <path d="M1665 390L1723 389M1676 394L1719 398M1666 396L1718 405M1665 399L1722 414M1674 406L1718 421M1668 409L1717 434M1670 414L1706 436M1660 412L1709 448M1656 413L1697 450M1655 415L1692 453M1660 427L1688 462M1652 423L1681 466M1650 428L1672 469M1647 429L1671 483M1642 427L1661 488M1638 422L1654 487M1635 422L1643 485M1631 430L1632 483M1629 423L1627 491M1624 437L1618 477M1623 422L1610 481M1619 425L1603 479M1617 420L1596 471M1613 420L1583 473M1608 424L1582 464M1609 417L1571 465M1601 420L1559 462M1606 412L1559 454M1597 414L1555 445M1592 412L1543 442M1595 407L1540 434M1598 402L1544 423M1587 403L1534 418M1597 396L1543 406M1597 393L1537 399M1594 390L1542 390M1597 387L1540 381M1593 384L1543 375M1594 380L1534 364M1587 374L1539 356M1593 372L1546 348M1594 368L1543 336M1595 364L1557 336M1602 365L1564 331M1606 365L1566 325M1607 361L1576 321M1608 356L1583 317M1613 360L1585 309M1612 346L1593 300M1618 353L1600 302M1623 359L1608 296M1625 347L1619 302M1628 355L1626 292M1632 343L1634 290M1634 353L1642 289M1639 352L1651 298M1645 345L1660 299M1647 352L1666 309M1649 356L1673 313M1648 363L1685 311M1659 354L1688 317M1655 363L1692 324M1658 365L1705 325M1660 368L1703 336M1669 367L1717 340M1665 373L1711 352M1667 376L1712 360M1662 381L1725 363M1665 384L1728 374M1673 386L1730 380" stroke="#b9c2c4" stroke-width=".7" opacity=".35" fill="none"/>
 <ellipse cx="1632" cy="383" rx="42" ry="36" fill="url(#core)"/>
 <path d="M1622 400c6 20 8 45 8 70h16c0-25-6-50-12-72z" fill="#9a9788" opacity=".6"/>
 <!-- second dandelion -->
 <g filter="url(#fz)"><circle cx="1504" cy="618" r="98" fill="url(#puff2)"/></g>
 <path d="M1578 618L1601 618M1574 621L1603 622M1572 625L1599 628M1571 628L1599 633M1575 634L1598 640M1574 640L1602 649M1572 643L1596 652M1567 645L1595 658M1567 649L1589 661M1561 649L1589 664M1565 658L1588 673M1565 662L1582 673M1554 659L1582 683M1559 669L1579 688M1555 671L1574 691M1547 668L1568 692M1544 672L1566 701M1543 675L1556 694M1538 674L1556 703M1538 685L1549 707M1531 677L1546 709M1530 686L1539 708M1524 682L1532 709M1523 687L1531 717M1519 688L1525 717M1514 682L1519 716M1509 692L1511 718M1506 687L1507 716M1501 686L1500 713M1497 693L1496 712M1496 683L1492 716M1491 683L1485 710M1485 687L1478 715M1483 679L1473 711M1476 688L1468 707M1473 683L1460 711M1471 682L1457 709M1470 674L1455 699M1468 672L1452 696M1464 669L1442 698M1455 673L1437 694M1451 671L1431 692M1448 669L1435 681M1455 660L1432 679M1448 659L1423 677M1449 653L1422 670M1444 652L1423 664M1442 648L1414 662M1434 647L1409 658M1436 644L1410 653M1441 637L1410 646M1433 635L1404 642M1438 630L1408 635M1431 626L1406 629M1436 622L1402 625M1439 618L1407 618M1432 615L1411 614M1439 611L1407 608M1435 605L1409 600M1441 602L1411 595M1443 599L1407 588M1443 597L1414 587M1441 591L1413 580M1444 590L1410 574M1443 584L1423 572M1440 578L1419 565M1452 580L1426 561M1451 574L1428 554M1452 569L1432 549M1458 573L1432 547M1455 562L1437 541M1463 563L1442 535M1462 556L1452 540M1469 558L1451 529M1474 558L1460 531M1474 555L1464 532M1481 557L1470 530M1484 556L1474 526M1486 546L1481 526M1488 546L1481 517M1495 553L1491 524M1499 543L1498 526M1501 549L1500 523M1507 550L1508 517M1509 548L1511 515M1514 554L1518 526M1518 551L1524 524M1522 549L1530 518M1525 550L1532 527M1531 550L1538 531M1534 552L1542 534M1537 557L1551 532M1542 555L1552 539M1540 565L1559 538M1543 567L1562 542M1551 564L1571 540M1553 567L1574 546M1560 568L1582 549M1555 576L1583 552M1559 576L1585 557M1562 581L1591 562M1565 583L1592 567M1565 587L1591 574M1565 592L1594 580M1565 595L1594 584M1576 596L1595 590M1575 601L1602 594M1577 605L1602 600M1575 610L1598 607M1578 613L1601 612" stroke="#dfe7e8" stroke-width="1.100" opacity=".5" fill="none"/>
 <!-- seeds -->
 <g stroke="#d5e2e6" stroke-width="1.100" stroke-linecap="round" opacity=".75">
  <path d="M1669 207l30-8M1698 244l16-27M1759 210l8-34M1683 298l20-18M1608 326l22-20M1628 322l34-18"/>
 </g>
 <g stroke="#dbe6e9" stroke-width=".8" opacity=".7" fill="none">
  <path d="M1699 199l8-9M1699 199l10-4M1699 199l10 2M1699 199l6 7M1699 199l2-11"/>
  <path d="M1714 217l10-6M1714 217l12 0M1714 217l8-10M1714 217l3-10M1714 217l-5-8"/>
  <path d="M1767 176l-13-6M1767 176l-8-9M1767 176l0-11M1767 176l8-9M1767 176l13-5"/>
  <path d="M1703 280l8-7M1703 280l10-1M1703 280l2-10M1703 280l9 5M1703 280l-4-9"/>
  <path d="M1630 306l6-8M1630 306l-4-8M1630 306l1-10M1630 306l9-3"/>
  <path d="M1662 304l6-8M1662 304l-3-9M1662 304l2-10M1662 304l9-3M1662 304l9 3"/>
 </g>
</svg>
<div class="abs" id="vt1" style="left:163.2px;top:159.5px;font-family:'Liberation Mono',monospace;font-weight:bold;font-size:30.5px;line-height:40px;color:#f4f4f4;white-space:nowrap;transform-origin:0 50%;transform:scaleX(1.077)">Happy Moments</div>
<div class="abs" id="vt2" style="left:204.2px;top:256px;font-family:'Liberation Mono',monospace;font-size:22.5px;line-height:30px;color:#f4f4f4;white-space:nowrap;transform-origin:0 50%;transform:scaleX(1.086)">video album</div>
</div>
<!-- edit button -->
<div class="abs" style="left:1283px;top:563px;width:254px;height:54px;background:linear-gradient(#f9f9f9,#eaeaea);border:1px solid #d4d4d4;box-shadow:0 1px 3px rgba(0,0,0,.3)"></div>
<div class="abs" style="left:1489px;top:569px;width:1px;height:42px;background:#c8c8c8"></div>
<div class="abs" id="edit" style="left:1307.2px;top:581px;font-size:16px;font-weight:bold;line-height:20px;color:#222;white-space:nowrap;transform-origin:0 50%;transform:scaleX(1.031)">Éditer la diapositive</div>
<svg class="abs" style="left:1500px;top:576px" width="28" height="28" viewBox="1500 576 28 28"><path d="M1503.500 600.800l1.300-6 12.600-12.600 4.700 4.700-12.600 12.600zM1518.600 581l1.600-1.600a1.600 1.600 0 0 1 2.300 0l2.400 2.400a1.600 1.600 0 0 1 0 2.300l-1.600 1.600z" fill="#1c3a69"/></svg>
<!-- progress -->
<div class="abs" style="left:909px;top:639px;width:1002px;height:7px;background:#b1b1b1"></div>
<div class="abs" style="left:909px;top:639px;width:68px;height:7px;background:#2aa9e0"></div>
<div class="abs" style="left:968px;top:633px;width:18px;height:18px;border-radius:50%;background:#f2f2f2;border:1px solid #9b8c7e"></div>
<div class="abs" style="left:972px;top:637px;width:10px;height:10px;border-radius:50%;background:#2a9fd6"></div>
<!-- play / stop -->
<div class="abs" style="left:923px;top:655px;width:42px;height:42px;border-radius:50%;background:linear-gradient(#fafafa,#e2e2e2);border:1px solid #c2c2c2;box-shadow:0 1px 3px rgba(0,0,0,.3)"></div>
<div class="abs" style="left:975px;top:660px;width:32px;height:32px;border-radius:50%;background:linear-gradient(#fafafa,#e2e2e2);border:1px solid #c2c2c2;box-shadow:0 1px 3px rgba(0,0,0,.3)"></div>
<svg class="abs" style="left:923px;top:655px" width="90" height="44" viewBox="923 655 90 44"><path d="M937.500 667.500v18l16.200-9z" fill="#1c3a69" stroke="#1c3a69" stroke-width="1.500" stroke-linejoin="round"/><rect x="985.500" y="670.500" width="11.500" height="11.500" rx="2.200" fill="#1c3a69"/></svg>
<div class="abs" id="time" style="left:1019.9px;top:667px;font-size:17px;line-height:20px;color:#444;white-space:nowrap;transform-origin:0 50%;transform:scaleX(1.060)">00:05.010</div>
<div class="abs" id="ratio" style="left:1740.8px;top:666px;font-size:14px;line-height:20px;color:#26395a;white-space:nowrap;-webkit-text-stroke:.3px #26395a;transform-origin:0 50%;transform:scaleX(1.090)">16:9</div>
<svg class="abs" style="left:1780px;top:660px" width="120" height="32" viewBox="1780 660 120 32">
 <rect x="1785" y="665" width="26" height="20.300" fill="#1c3a69"/><rect x="1790.300" y="667.300" width="15" height="15.700" fill="#f4f4f4"/>
 <path d="M1832.500 671v-5h5M1841 666h5M1847.500 666h5v5M1852.500 675v4M1852.500 681v4.800h-4" fill="none" stroke="#1c3a69" stroke-width="1.600"/>
 <path d="M1830 676.500a2 2 0 0 1 2-2h2.500l1.500-2h5l1.500 2h2a2 2 0 0 1 2 2v7.500a2 2 0 0 1-2 2h-12.500a2 2 0 0 1-2-2z" fill="#1c3a69"/><circle cx="1838.500" cy="680.500" r="2.300" fill="#f4f4f4"/>
 <rect x="1871.700" y="664.800" width="22.400" height="21.800" rx="1.500" fill="none" stroke="#1c3a69" stroke-width="1.500"/>
 <path d="M1876 674v-5h5M1876.300 669.300l4.500 4.500M1890 674v-5h-5M1889.700 669.300l-4.500 4.500M1876 678v5h5M1876.300 682.700l4.500-4.500M1890 678v5h-5M1889.700 682.700l-4.500-4.500" fill="none" stroke="#1c3a69" stroke-width="1.500"/>
</svg>

<!-- TIMELINE -->
<div class="abs" style="left:2px;top:715px;width:1916px;height:250px;background:#bdbdbd"></div>
<div class="abs" style="left:2px;top:715px;width:1916px;height:2px;background:linear-gradient(#d9d9d9,#bdbdbd)"></div>
<div class="card sel" style="left:16px"><div class="th" id="th1"><svg width="172" height="97" viewBox="0 0 172 97"><defs><radialGradient id="h1b" gradientUnits="userSpaceOnUse" cx="120" cy="45" r="120"><stop offset="0" stop-color="#1c3a45"/><stop offset=".4" stop-color="#152d37"/><stop offset="1" stop-color="#0f2129"/></radialGradient><radialGradient id="h1p" cx=".5" cy=".5" r=".5"><stop offset="0" stop-color="#fff"/><stop offset=".6" stop-color="#f4f7f8" stop-opacity=".95"/><stop offset=".85" stop-color="#dfe7ea" stop-opacity=".6"/><stop offset="1" stop-color="#c0d0d4" stop-opacity="0"/></radialGradient></defs><rect width="172" height="97" fill="url(#h1b)"/>
<path d="M126.500 66h3.600l.4 31h-3.800z" fill="#8d8a4e"/><circle cx="127" cy="52.500" r="21.500" fill="url(#h1p)"/><circle cx="127.300" cy="51" r="5" fill="#6b5b50" opacity=".8"/><circle cx="103" cy="95" r="19" fill="url(#h1p)" opacity=".85"/>
<path d="M134 36l10-13 8-11 8-12" stroke="#dfe9ec" stroke-width="1.700" stroke-dasharray="2 3.500" stroke-linecap="round" opacity=".6" fill="none"/>
<text x="31" y="36" font-family="Liberation Mono,monospace" font-weight="bold" font-size="6.200" fill="#eee">Happy Moments</text><text x="39" y="52" font-family="Liberation Mono,monospace" font-size="4.300" fill="#9fb0b6">video album</text></svg></div><div class="num">01</div>
<svg class="ic" width="60" height="24" viewBox="0 0 60 24"><g transform="translate(1.300 1.800) scale(.86)"><path d="M2.500 20.500l1.200-5.300 10.600-10.600 4.100 4.100-10.600 10.600zM15.300 3.600l1.300-1.300a1.400 1.400 0 0 1 2 0l2.100 2.100a1.400 1.400 0 0 1 0 2l-1.300 1.300z" fill="#1c3a69"/></g><path d="M32.500 8.600h3.800l5.700-5v16l-5.700-5h-3.800z" fill="#1c3a69"/><path d="M43 8.200a4.200 4.200 0 0 1 0 6.800z" fill="#6f86ad"/></svg>
<div class="dur">7.0</div></div>
<div class="card" style="left:298px"><div class="th" id="th2"><svg width="172" height="97" viewBox="0 0 172 97"><defs><linearGradient id="h2s" x1="0" y1="0" x2="0" y2="1"><stop offset="0" stop-color="#7a8594"/><stop offset=".4" stop-color="#b9a98a"/><stop offset=".48" stop-color="#e8c66a"/><stop offset=".52" stop-color="#5a5a22"/><stop offset="1" stop-color="#22260e"/></linearGradient><radialGradient id="h2g" gradientUnits="userSpaceOnUse" cx="78" cy="54" r="26"><stop offset="0" stop-color="#fff6c8"/><stop offset=".3" stop-color="#f6d46a" stop-opacity=".85"/><stop offset="1" stop-color="#d8a030" stop-opacity="0"/></radialGradient><filter id="hb2"><feGaussianBlur stdDeviation=".8"/></filter></defs><rect width="172" height="97" fill="#000"/>
<rect x="46.500" y="28" width="80" height="54" fill="#d8d8d8"/><rect x="48" y="29.500" width="77" height="51" fill="url(#h2s)"/><rect x="48" y="29.500" width="77" height="51" fill="url(#h2g)"/>
<g filter="url(#hb2)"><path d="M84 80c0-10 2-22 6-30 2-6 8-6 10 0 2-6 4-8 7-9l1 3c-3 3-4 8-5 12 2 8 2 16 1 24z" fill="#8a5a3c"/><circle cx="94" cy="46" r="4.500" fill="#6a4428"/><path d="M88 62c4-2 10-2 14 2v16h-14z" fill="#c48a7a" opacity=".8"/></g></svg></div><div class="num">02</div>
<svg class="ic" width="60" height="24" viewBox="0 0 60 24"><g transform="translate(1.300 1.800) scale(.86)"><path d="M2.500 20.500l1.200-5.300 10.600-10.600 4.100 4.100-10.600 10.600zM15.300 3.600l1.300-1.300a1.400 1.400 0 0 1 2 0l2.100 2.100a1.400 1.400 0 0 1 0 2l-1.300 1.300z" fill="#1c3a69"/></g><path d="M32.500 8.600h3.800l5.700-5v16l-5.700-5h-3.800z" fill="#1c3a69"/><path d="M43 8.200a4.200 4.200 0 0 1 0 6.800z" fill="#6f86ad"/></svg>
<div class="dur">9.0</div></div>
<div class="card" style="left:579px"><div class="th" id="th3"><svg width="172" height="97" viewBox="0 0 172 97"><defs><linearGradient id="h3s" x1="0" y1="0" x2="0" y2="1"><stop offset="0" stop-color="#eccba6"/><stop offset=".27" stop-color="#e9c4a6"/><stop offset=".3" stop-color="#cdbdb6"/><stop offset=".55" stop-color="#d2c6c2"/><stop offset=".8" stop-color="#bdb2ac"/><stop offset="1" stop-color="#9a9692"/></linearGradient><radialGradient id="h3g" gradientUnits="userSpaceOnUse" cx="122" cy="8" r="62"><stop offset="0" stop-color="#fffbe8"/><stop offset=".3" stop-color="#fbe6b4" stop-opacity=".85"/><stop offset="1" stop-color="#f0c890" stop-opacity="0"/></radialGradient><radialGradient id="h3h" gradientUnits="userSpaceOnUse" cx="150" cy="92" r="34"><stop offset="0" stop-color="#fbe8c0"/><stop offset="1" stop-color="#f0d0a0" stop-opacity="0"/></radialGradient><filter id="hb3"><feGaussianBlur stdDeviation=".9"/></filter></defs><rect width="172" height="97" fill="url(#h3s)"/><rect width="172" height="97" fill="url(#h3g)"/><rect width="172" height="97" fill="url(#h3h)"/>
<g filter="url(#hb3)"><path d="M0 36c30-2 50 1 80 0v2c-30 1-50-1-80 1zM0 50c30-2 60 2 90 0v2.500c-30 1-60-1-90 1zM0 66c24-3 50 2 84 0v3c-30 2-54-2-84 2zM10 84c24-4 44 0 70-2v3c-26 2-46 0-70 4z" fill="#ebe4e0" opacity=".75"/><path d="M152 0h20v6c-8 1-14-1-20-6zM162 82c4-2 8-2 10 0v15h-14z" fill="#6a5a4a" opacity=".7"/>
<path d="M84 97c-2-14-4-26-3-36-3-4-3-12 2-18 4-4 12-6 20-4 5 8 6 26 4 58z" fill="#4c4846"/><ellipse cx="100.500" cy="23" rx="8.500" ry="10" fill="#b07a52"/><path d="M91.500 22c0-12 17-13 18.500-1-5-5-12-6-18.500 1z" fill="#80502c"/><path d="M94 27c2 6 10 8 14 2l-2 8c-4 2-8 2-10-2z" fill="#8a5630"/>
<path d="M118 97c-2-12-2-24 0-34 2-12 8-18 16-18 8 2 12 12 12 24 0 10-4 20-6 28z" fill="#e2b494"/><path d="M113 80c6-4 14-4 18 0l-2 17h-14z" fill="#b83028"/><path d="M124 92h8v5h-8z" fill="#3a8ab0"/><ellipse cx="127" cy="30" rx="8" ry="9.500" fill="#e0a888"/><path d="M118.500 30c-1-12 14-16 19-6 5 10 12 30 12 46-6-4-8-16-12-26-2-8-6-14-12-16-4 0-6 0-7 2z" fill="#a8562c"/>
<path d="M106 62c-1-8 2-14 8-15 6 0 9 6 9 14s-2 18-6 24c-6-4-10-12-11-23z" fill="#dfe3e6"/><circle cx="114" cy="40" r="6.500" fill="#ecc8b0"/><path d="M100 72c6 2 14 2 22-4l2 4c-8 6-16 8-24 6z" fill="#e0b090"/></g></svg></div><div class="num">03</div>
<svg class="ic" width="60" height="24" viewBox="0 0 60 24"><g transform="translate(1.300 1.800) scale(.86)"><path d="M2.500 20.500l1.200-5.300 10.600-10.600 4.100 4.100-10.600 10.600zM15.300 3.600l1.300-1.300a1.400 1.400 0 0 1 2 0l2.100 2.100a1.400 1.400 0 0 1 0 2l-1.300 1.300z" fill="#1c3a69"/></g><path d="M32.500 8.600h3.800l5.700-5v16l-5.700-5h-3.800z" fill="#1c3a69"/><path d="M43 8.200a4.200 4.200 0 0 1 0 6.800z" fill="#6f86ad"/></svg>
<div class="dur">7.0</div></div>
<div class="card" style="left:861px"><div class="th" id="th4"><svg width="172" height="97" viewBox="0 0 172 97"><defs><filter id="hb4"><feGaussianBlur stdDeviation=".8"/></filter><linearGradient id="h4a" x1="0" y1="0" x2="0" y2="1"><stop offset="0" stop-color="#d9dbde"/><stop offset=".6" stop-color="#d0d2d6"/><stop offset=".74" stop-color="#a4805c"/><stop offset=".8" stop-color="#8a5426"/><stop offset="1" stop-color="#6e4220"/></linearGradient><clipPath id="h4c"><polygon points="21.8,16.9 64.8,9.7 107.8,10.9 150.8,16.9 150.8,81.7 110.0,89.5 63.7,88.4 21.8,81.7"/></clipPath></defs><rect width="172" height="97" fill="#000"/>
<g filter="url(#hb4)"><g clip-path="url(#h4c)"><rect width="172" height="97" fill="url(#h4a)"/><polygon points="21.8,16.9 50.5,14.2 50.5,83.9 21.8,81.7" fill="#c6cad2" opacity=".8"/>
<polygon points="22.9,43.0 36.2,50.7 38.4,81.7 22.9,81.7" fill="#9a8432"/>
<g stroke="#3c3c44" stroke-width="1.600" fill="none"><polyline points="59.3,15.3 51.6,48.5"/><polyline points="68.1,29.7 62.6,64.0"/><polyline points="68.1,29.7 83.6,31.3 107.8,30.8" stroke-width="1.300"/><polyline points="94.6,12.0 89.1,30.8"/><polyline points="105.6,12.0 100.1,30.8"/><polyline points="113.3,27.5 131.0,26.4" stroke-width="1.300"/><polyline points="138.7,18.6 146.4,59.6"/><polyline points="120.0,15.3 120.0,29.7"/></g>
<polygon points="83.6,31.9 106.7,30.8 105.6,70.7 85.8,70.7" fill="#4c4852"/><ellipse cx="94.6" cy="40.8" rx="5" ry="5.500" fill="#8a7068"/>
<polygon points="116.6,30.8 146.4,29.7 148.6,64.0 122.2,65.1" fill="#3c3a42"/><ellipse cx="126.0" cy="35.2" rx="5" ry="5" fill="#8a6a5a"/>
<ellipse cx="53.8" cy="59.6" rx="8" ry="7" fill="#7a5468"/><ellipse cx="43.9" cy="55.1" rx="4" ry="4.500" fill="#c8b8c0"/><ellipse cx="68.1" cy="65.1" rx="5.500" ry="6" fill="#b08a70"/><path d="M58.2 70.7h22v8h-22z" fill="#3a5070"/>
<polyline points="41.7,18.6 41.7,83.9" stroke="#eee" stroke-width=".6" opacity=".7" fill="none"/><polyline points="81.4,28.6 81.4,88.4" stroke="#eee" stroke-width=".6" opacity=".6" fill="none"/><polyline points="111.1,26.4 111.1,88.4" stroke="#222" stroke-width=".8" opacity=".5" fill="none"/></g></g></svg></div><div class="num">04</div>
<svg class="ic" width="60" height="24" viewBox="0 0 60 24"><g transform="translate(1.300 1.800) scale(.86)"><path d="M2.500 20.500l1.200-5.300 10.600-10.600 4.100 4.100-10.600 10.600zM15.300 3.600l1.300-1.300a1.400 1.400 0 0 1 2 0l2.100 2.100a1.400 1.400 0 0 1 0 2l-1.300 1.300z" fill="#1c3a69"/></g><path d="M32.500 8.600h3.800l5.700-5v16l-5.700-5h-3.800z" fill="#1c3a69"/><path d="M43 8.200a4.200 4.200 0 0 1 0 6.800z" fill="#6f86ad"/></svg>
<div class="dur">9.0</div></div>
<div class="card" style="left:1142px"><div class="th" id="th5"><svg width="172" height="97" viewBox="0 0 172 97"><defs><filter id="hb5"><feGaussianBlur stdDeviation=".7"/></filter><linearGradient id="h5w" x1="0" y1="0" x2="0" y2="1"><stop offset="0" stop-color="#9a6e50"/><stop offset=".5" stop-color="#805438"/><stop offset="1" stop-color="#6a4430"/></linearGradient></defs><rect width="172" height="97" fill="#030303"/><rect y="16.800" width="172" height="61.200" fill="url(#h5w)"/>
<g filter="url(#hb5)"><path d="M0 30h172M0 44h172M0 58h172M0 70h172" stroke="#5e3c28" stroke-width=".8" opacity=".7"/><rect x="108" y="17" width="12" height="26" fill="#c4c8c4" opacity=".85"/><rect x="96" y="17" width="12" height="20" fill="#7a523a"/><circle cx="31.9" cy="26.2" r="7.2" fill="#ece8dc"/><circle cx="31.9" cy="26.2" r="4.9" fill="#d8c050"/><circle cx="60.0" cy="28.4" r="5.0" fill="#ece8dc"/><circle cx="60.0" cy="28.4" r="3.4" fill="#a09a50"/><circle cx="84.7" cy="31.1" r="7.2" fill="#ece8dc"/><circle cx="84.7" cy="31.1" r="4.9" fill="#8a8a30"/><circle cx="150.2" cy="27.3" r="7.2" fill="#ece8dc"/><circle cx="150.2" cy="27.3" r="4.9" fill="#d8c050"/><circle cx="8.3" cy="44.9" r="6.1" fill="#ece8dc"/><circle cx="8.3" cy="44.9" r="4.1" fill="#8a6a40"/><circle cx="97.4" cy="52.6" r="6.1" fill="#ece8dc"/><circle cx="97.4" cy="52.6" r="4.1" fill="#b0a840"/><circle cx="125.4" cy="44.9" r="5.5" fill="#ece8dc"/><circle cx="125.4" cy="44.9" r="3.7" fill="#9a8a40"/><circle cx="28.1" cy="58.1" r="5.5" fill="#7aa040"/><circle cx="144.1" cy="59.2" r="5.5" fill="#7aa040"/><circle cx="23.7" cy="70.2" r="6.8" fill="#ece8dc"/><circle cx="23.7" cy="70.2" r="4.6" fill="#b06a30"/><circle cx="55.6" cy="70.2" r="6.4" fill="#ece8dc"/><circle cx="55.6" cy="70.2" r="4.3" fill="#7a9a38"/><circle cx="86.4" cy="70.2" r="6.1" fill="#ece8dc"/><circle cx="86.4" cy="70.2" r="4.1" fill="#8a8a30"/><circle cx="138.1" cy="71.3" r="6.4" fill="#ece8dc"/><circle cx="138.1" cy="71.3" r="4.3" fill="#b86a30"/><circle cx="167.8" cy="70.2" r="5.0" fill="#7aa040"/><circle cx="43.5" cy="60.3" r="4.2" fill="#6a9038"/><circle cx="155.7" cy="62.5" r="4.2" fill="#6a9038"/><path d="M19.3 46.0L41.3 41.6" stroke="#d8a870" stroke-width="4.5" stroke-linecap="round"/><path d="M12.7 50.4L43.5 50.4" stroke="#d0a080" stroke-width="3" stroke-linecap="round"/><path d="M46.8 24.0L51.2 43.8" stroke="#d0a080" stroke-width="3" stroke-linecap="round"/><path d="M68.8 26.2L60.0 44.9" stroke="#c89878" stroke-width="3" stroke-linecap="round"/><path d="M68.8 47.1L100.7 46.0" stroke="#d8a880" stroke-width="3.2" stroke-linecap="round"/><path d="M129.3 50.4L159.0 51.5" stroke="#d0a080" stroke-width="3" stroke-linecap="round"/><path d="M138.1 46.0L155.7 41.6" stroke="#d8a870" stroke-width="4.5" stroke-linecap="round"/><path d="M163.4 25.1L166.7 44.9" stroke="#d0a080" stroke-width="3" stroke-linecap="round"/><path d="M106.2 63.6L110.6 74.6" stroke="#c89878" stroke-width="3" stroke-linecap="round"/><path d="M49.0 59.2L40.2 70.2" stroke="#2a3a3a" stroke-width="3" stroke-linecap="round"/><path d="M154.6 70.2L150.2 76.8" stroke="#2a3a4a" stroke-width="4" stroke-linecap="round"/>
<ellipse cx="113" cy="48" rx="9" ry="5.500" fill="#1c1818"/><ellipse cx="111" cy="59.500" rx="6.500" ry="4.500" fill="#d8a890"/><ellipse cx="114" cy="66" rx="5" ry="3.500" fill="#1c1818"/><circle cx="8" cy="32" r="4" fill="#3a2218"/><circle cx="125" cy="33" r="4" fill="#3a2218"/><path d="M70 44c4 4 8 12 6 20" stroke="#6a4a8a" stroke-width="2.500" fill="none" opacity=".6"/></g><rect x="0.0" y="8.600" width="6.600" height="6" rx="1.200" fill="#f0f0f0" opacity="1"/><rect x="14.9" y="8.600" width="6.600" height="6" rx="1.200" fill="#f0f0f0" opacity="1"/><rect x="31.4" y="8.600" width="6.600" height="6" rx="1.200" fill="#f0f0f0" opacity="0.2"/><rect x="47.9" y="8.600" width="6.600" height="6" rx="1.200" fill="#f0f0f0" opacity="1"/><rect x="64.4" y="8.600" width="6.600" height="6" rx="1.200" fill="#f0f0f0" opacity="0.45"/><rect x="80.9" y="8.600" width="6.600" height="6" rx="1.200" fill="#f0f0f0" opacity="0.35"/><rect x="97.4" y="8.600" width="6.600" height="6" rx="1.200" fill="#f0f0f0" opacity="0.9"/><rect x="113.9" y="8.600" width="6.600" height="6" rx="1.200" fill="#f0f0f0" opacity="0.95"/><rect x="134.8" y="8.600" width="6.600" height="6" rx="1.200" fill="#f0f0f0" opacity="1"/><rect x="151.3" y="8.600" width="6.600" height="6" rx="1.200" fill="#f0f0f0" opacity="0.25"/><rect x="167.8" y="8.600" width="6.600" height="6" rx="1.200" fill="#f0f0f0" opacity="0.9"/><rect x="0.6" y="80" width="6.600" height="7.200" rx="1.200" fill="#e4e8f0" opacity="0.9"/><rect x="17.1" y="80" width="6.600" height="7.200" rx="1.200" fill="#e4e8f0" opacity="0.12"/><rect x="33.6" y="80" width="6.600" height="7.200" rx="1.200" fill="#e4e8f0" opacity="0.15"/><rect x="49.0" y="80" width="6.600" height="7.200" rx="1.200" fill="#e4e8f0" opacity="0.8"/><rect x="64.4" y="80" width="6.600" height="7.200" rx="1.200" fill="#e4e8f0" opacity="0.35"/><rect x="80.9" y="80" width="6.600" height="7.200" rx="1.200" fill="#e4e8f0" opacity="0.3"/><rect x="96.3" y="80" width="6.600" height="7.200" rx="1.200" fill="#e4e8f0" opacity="0.3"/><rect x="113.9" y="80" width="6.600" height="7.200" rx="1.200" fill="#e4e8f0" opacity="0.9"/><rect x="131.5" y="80" width="6.600" height="7.200" rx="1.200" fill="#e4e8f0" opacity="0.15"/><rect x="148.0" y="80" width="6.600" height="7.200" rx="1.200" fill="#e4e8f0" opacity="0.15"/><rect x="163.4" y="80" width="6.600" height="7.200" rx="1.200" fill="#e4e8f0" opacity="0.8"/></svg></div><div class="num">05</div>
<svg class="ic" width="60" height="24" viewBox="0 0 60 24"><g transform="translate(1.300 1.800) scale(.86)"><path d="M2.500 20.500l1.200-5.300 10.600-10.600 4.100 4.100-10.600 10.600zM15.300 3.600l1.300-1.300a1.400 1.400 0 0 1 2 0l2.100 2.100a1.400 1.400 0 0 1 0 2l-1.300 1.300z" fill="#1c3a69"/></g><path d="M32.500 8.600h3.800l5.700-5v16l-5.700-5h-3.800z" fill="#1c3a69"/><path d="M43 8.200a4.200 4.200 0 0 1 0 6.800z" fill="#6f86ad"/></svg>
<div class="dur">9.0</div></div>
<div class="card" style="left:1423px"><div class="th" id="th6"><svg width="172" height="97" viewBox="0 0 172 97"><defs><filter id="hb6"><feGaussianBlur stdDeviation=".7"/></filter><clipPath id="h6c"><polygon points="44.7,19.7 130.1,20.3 128.4,77.9 44.1,75.6"/></clipPath><radialGradient id="h6g" gradientUnits="userSpaceOnUse" cx="100.3" cy="34.1" r="14"><stop offset="0" stop-color="#fffdf0"/><stop offset="1" stop-color="#fff8e0" stop-opacity="0"/></radialGradient></defs><rect width="172" height="97" fill="#000"/><g filter="url(#hb6)"><circle cx="14.3" cy="19.2" r="1.4" fill="#f0f0f0" opacity=".85"/><circle cx="35.3" cy="26.9" r="1.8" fill="#f0f0f0" opacity=".85"/><circle cx="49.6" cy="13.1" r="1.2" fill="#f0f0f0" opacity=".85"/><circle cx="80.5" cy="7.5" r="1.2" fill="#f0f0f0" opacity=".85"/><circle cx="86.5" cy="13.1" r="1.4" fill="#f0f0f0" opacity=".85"/><circle cx="92.1" cy="14.7" r="1.2" fill="#f0f0f0" opacity=".85"/><circle cx="126.2" cy="12.5" r="1.3" fill="#f0f0f0" opacity=".85"/><circle cx="132.3" cy="8.1" r="0.9" fill="#f0f0f0" opacity=".85"/><circle cx="154.9" cy="21.4" r="1.4" fill="#f0f0f0" opacity=".85"/><circle cx="150.5" cy="25.2" r="1.6" fill="#f0f0f0" opacity=".85"/><circle cx="168.7" cy="41.3" r="2.1" fill="#f0f0f0" opacity=".85"/><circle cx="144.4" cy="63.5" r="2.5" fill="#f0f0f0" opacity=".85"/><circle cx="154.9" cy="77.3" r="1.6" fill="#f0f0f0" opacity=".85"/><circle cx="154.9" cy="85.0" r="1.6" fill="#f0f0f0" opacity=".85"/><circle cx="99.8" cy="86.7" r="2.1" fill="#f0f0f0" opacity=".85"/><circle cx="87.1" cy="88.4" r="1.9" fill="#f0f0f0" opacity=".85"/><circle cx="76.6" cy="87.8" r="1.2" fill="#f0f0f0" opacity=".85"/><circle cx="35.8" cy="93.4" r="1.7" fill="#f0f0f0" opacity=".85"/><circle cx="28.1" cy="86.2" r="2.1" fill="#f0f0f0" opacity=".85"/><circle cx="12.7" cy="82.3" r="2.3" fill="#f0f0f0" opacity=".85"/><circle cx="18.2" cy="65.1" r="2.4" fill="#f0f0f0" opacity=".85"/><circle cx="21.5" cy="56.8" r="1.5" fill="#f0f0f0" opacity=".85"/><circle cx="3.3" cy="55.7" r="1.8" fill="#f0f0f0" opacity=".85"/><circle cx="36.9" cy="51.3" r="1.2" fill="#f0f0f0" opacity=".85"/><circle cx="12.1" cy="37.4" r="1" fill="#f0f0f0" opacity=".85"/><circle cx="4.4" cy="29.1" r="0.9" fill="#f0f0f0" opacity=".85"/><circle cx="19.3" cy="29.7" r="0.8" fill="#f0f0f0" opacity=".85"/><circle cx="140.6" cy="31.9" r="1" fill="#f0f0f0" opacity=".85"/><circle cx="135.1" cy="35.2" r="0.9" fill="#f0f0f0" opacity=".85"/><circle cx="160.4" cy="70.7" r="1.1" fill="#f0f0f0" opacity=".85"/><circle cx="147.2" cy="69.5" r="1" fill="#f0f0f0" opacity=".85"/><circle cx="1.1" cy="66.8" r="1.6" fill="#f0f0f0" opacity=".85"/><circle cx="32.0" cy="65.1" r="1" fill="#f0f0f0" opacity=".85"/><circle cx="91.0" cy="79.0" r="1.1" fill="#f0f0f0" opacity=".85"/><circle cx="162.6" cy="1.4" r="1" fill="#f0f0f0" opacity=".85"/><circle cx="159.3" cy="8.6" r="0.9" fill="#f0f0f0" opacity=".85"/><circle cx="170.3" cy="26.4" r="0.8" fill="#f0f0f0" opacity=".85"/></g>
<g clip-path="url(#h6c)"><rect x="40" y="15" width="95" height="66" fill="#f1f0ea"/><g filter="url(#hb6)"><polygon points="44.1,19.7 62.3,19.7 53.5,25.2 49.6,29.7 49.1,76.2 44.1,76.2" fill="#5a2418"/><polygon points="103.1,55.1 118.5,40.8 130.1,38.5 130.1,72.9 120.7,72.9" fill="#c89868"/><polygon points="49.1,56.3 62.3,58.5 62.3,76.2 49.1,76.2" fill="#5a5048"/><polygon points="120.7,64.0 130.1,61.8 130.1,78.4 120.7,78.4" fill="#4a5a3a"/>
<polygon points="57.9,78.4 64.5,61.8 75.5,57.4 103.1,58.5 115.2,64.0 121.8,78.4" fill="#5c5c46"/><ellipse cx="93.7" cy="37.4" rx="8" ry="10.500" fill="#4a4038"/><path d="M85.4 29.7c3-6 12-7 16-1l-3 3c-4-2-9-2-13-2z" fill="#6a5040"/><polygon points="83.2,31.9 97.6,31.3 97.6,41.9 84.3,43.0" fill="#2c2c30"/>
<polygon points="72.2,34.1 82.1,31.9 84.3,45.2 79.9,59.6 68.9,56.3 70.0,43.0" fill="#c8845a"/><polygon points="85.4,50.7 94.3,52.9 100.9,65.1 93.2,70.7 85.4,61.8" fill="#c88a60"/><polygon points="66.7,56.3 79.9,60.7 78.8,64.0 65.6,59.6" fill="#2a2420"/><rect width="172" height="97" fill="url(#h6g)"/></g></g></svg></div><div class="num">06</div>
<svg class="ic" width="60" height="24" viewBox="0 0 60 24"><g transform="translate(1.300 1.800) scale(.86)"><path d="M2.500 20.500l1.200-5.300 10.600-10.600 4.100 4.100-10.600 10.600zM15.300 3.600l1.300-1.300a1.400 1.400 0 0 1 2 0l2.100 2.100a1.400 1.400 0 0 1 0 2l-1.300 1.300z" fill="#1c3a69"/></g><path d="M32.500 8.600h3.800l5.700-5v16l-5.700-5h-3.800z" fill="#1c3a69"/><path d="M43 8.200a4.200 4.200 0 0 1 0 6.800z" fill="#6f86ad"/></svg>
<div class="dur">8.0</div></div>
<div class="card" style="left:1705px"><div class="th" id="th7"><svg width="172" height="97" viewBox="0 0 172 97"><defs><filter id="hb7"><feGaussianBlur stdDeviation=".6"/></filter><clipPath id="h7l"><polygon points="7.200,31.300 38.500,29.200 38.500,66.800 7.200,65.100"/></clipPath><clipPath id="h7r"><polygon points="134,29.200 164,31.300 164,65.100 134,66.800"/></clipPath></defs><rect width="172" height="97" fill="#000"/><g filter="url(#hb7)">
<g clip-path="url(#h7l)"><g opacity="0.9"><rect x="-6.0" y="29.0" width="56.0" height="38.0" fill="#a9cbdc"/><ellipse cx="19.2" cy="32.0" rx="11.2" ry="1.9" fill="#e8f0f4" opacity=".8"/><ellipse cx="33.2" cy="39.3" rx="15.7" ry="2.7" fill="#e8f0f4" opacity=".85"/><ellipse cx="5.2" cy="40.4" rx="11.2" ry="1.9" fill="#e8f0f4" opacity=".7"/>
<rect x="-6.0" y="44.2" width="56.0" height="2.7" fill="#8aa4b8"/><rect x="-6.0" y="46.5" width="56.0" height="20.5" fill="#d6cfca"/><rect x="-6.0" y="47.2" width="14.6" height="10.6" fill="#c4965e"/><path d="M-3.8 67.0v-7.6c5.6 -3.8 11.2 -3.0 16.8 0v7.6z" fill="#b2c2ce"/>
<path d="M31.5 67.0c0 -11.4 2.8 -16.0 7.8 -16.0s5.6 7.6 5.6 16.0z" fill="#f2f2f2"/>
<rect x="13.6" y="57.1" width="14.0" height="3.8" fill="#6aa8a0"/><rect x="13.3" y="59.4" width="13.4" height="7.6" fill="#1e3a3a"/>
<polygon points="4.6,43.4 38.8,43.6 36.6,56.4 24.8,57.9 6.9,55.6" fill="#c2cdc8" opacity=".95"/><ellipse cx="22.0" cy="50.3" rx="5.6" ry="4.6" fill="#9ab8a8" opacity=".6"/>
<ellipse cx="22.4" cy="40.8" rx="3.9" ry="3.2" fill="#2a4a44"/><ellipse cx="22.4" cy="42.3" rx="2.5" ry="1.5" fill="#b89078"/></g></g><g clip-path="url(#h7r)"><g opacity="0.9"><rect x="122.0" y="29.0" width="56.0" height="38.0" fill="#a9cbdc"/><ellipse cx="147.2" cy="32.0" rx="11.2" ry="1.9" fill="#e8f0f4" opacity=".8"/><ellipse cx="161.2" cy="39.3" rx="15.7" ry="2.7" fill="#e8f0f4" opacity=".85"/><ellipse cx="133.2" cy="40.4" rx="11.2" ry="1.9" fill="#e8f0f4" opacity=".7"/>
<rect x="122.0" y="44.2" width="56.0" height="2.7" fill="#8aa4b8"/><rect x="122.0" y="46.5" width="56.0" height="20.5" fill="#d6cfca"/><rect x="122.0" y="47.2" width="14.6" height="10.6" fill="#c4965e"/><path d="M124.2 67.0v-7.6c5.6 -3.8 11.2 -3.0 16.8 0v7.6z" fill="#b2c2ce"/>
<path d="M159.5 67.0c0 -11.4 2.8 -16.0 7.8 -16.0s5.6 7.6 5.6 16.0z" fill="#f2f2f2"/>
<rect x="141.6" y="57.1" width="14.0" height="3.8" fill="#6aa8a0"/><rect x="141.3" y="59.4" width="13.4" height="7.6" fill="#1e3a3a"/>
<polygon points="132.6,43.4 166.8,43.6 164.6,56.4 152.8,57.9 134.9,55.6" fill="#c2cdc8" opacity=".95"/><ellipse cx="150.0" cy="50.3" rx="5.6" ry="4.6" fill="#9ab8a8" opacity=".6"/>
<ellipse cx="150.4" cy="40.8" rx="3.9" ry="3.2" fill="#2a4a44"/><ellipse cx="150.4" cy="42.3" rx="2.5" ry="1.5" fill="#b89078"/></g></g>
<rect x="38.300" y="14" width="96" height="66.800" fill="#eef2f2"/><g opacity="1"><rect x="40.0" y="15.7" width="92.6" height="63.4" fill="#a9cbdc"/><ellipse cx="81.7" cy="20.8" rx="18.5" ry="3.2" fill="#e8f0f4" opacity=".8"/><ellipse cx="104.8" cy="32.8" rx="25.9" ry="4.4" fill="#e8f0f4" opacity=".85"/><ellipse cx="58.5" cy="34.7" rx="18.5" ry="3.2" fill="#e8f0f4" opacity=".7"/>
<rect x="40.0" y="41.1" width="92.6" height="4.4" fill="#8aa4b8"/><rect x="40.0" y="44.9" width="92.6" height="34.2" fill="#d6cfca"/><rect x="40.0" y="46.1" width="24.1" height="17.8" fill="#c4965e"/><path d="M43.7 79.1v-12.7c9.3 -6.3 18.5 -5.1 27.8 0v12.7z" fill="#b2c2ce"/>
<path d="M102.0 79.1c0 -19.0 4.6 -26.6 13.0 -26.6s9.3 12.7 9.3 26.6z" fill="#f2f2f2"/>
<rect x="72.4" y="62.6" width="23.1" height="6.3" fill="#6aa8a0"/><rect x="71.9" y="66.4" width="22.2" height="12.7" fill="#1e3a3a"/>
<polygon points="57.6,39.8 114.1,40.1 110.4,61.3 90.9,63.9 61.3,60.1" fill="#c2cdc8" opacity=".95"/><ellipse cx="86.3" cy="51.2" rx="9.3" ry="7.6" fill="#9ab8a8" opacity=".6"/>
<ellipse cx="86.9" cy="35.4" rx="6.5" ry="5.4" fill="#2a4a44"/><ellipse cx="86.9" cy="37.9" rx="4.2" ry="2.5" fill="#b89078"/></g></g></svg></div><div class="num">07</div>
<svg class="ic" width="60" height="24" viewBox="0 0 60 24"><g transform="translate(1.300 1.800) scale(.86)"><path d="M2.500 20.500l1.200-5.300 10.600-10.600 4.100 4.100-10.600 10.600zM15.300 3.600l1.300-1.300a1.400 1.400 0 0 1 2 0l2.100 2.100a1.400 1.400 0 0 1 0 2l-1.300 1.300z" fill="#1c3a69"/></g><path d="M32.500 8.600h3.800l5.700-5v16l-5.700-5h-3.800z" fill="#1c3a69"/><path d="M43 8.200a4.200 4.200 0 0 1 0 6.800z" fill="#6f86ad"/></svg>
<div class="dur">8.0</div></div>
<div class="tr" style="left:217px"><i id="tr1" style="background:repeating-conic-gradient(rgba(255,255,255,.13) 0 25%,rgba(255,255,255,0) 0 50%) 0 0/7px 7px,radial-gradient(ellipse 48% 62% at 60% 80%,#2f8fe2 0,#3c9fe6 70%,rgba(60,159,230,0) 72%),linear-gradient(160deg,#63cdf0,#3fa8e8)"></i></div><div class="trl" style="left:217px">2.0</div>
<div class="tr" style="left:498px"><i id="tr2" style="background:conic-gradient(from 270deg at 55% 55%,#fff 0deg,#c8ecf8 25deg,#8fd6f2 80deg,#4fb2e8 150deg,#2a90dc 215deg,#58b6ea 280deg,#c4eaf8 335deg,#fff 360deg)"></i></div><div class="trl" style="left:498px">2.0</div>
<div class="tr" style="left:780px"><i id="tr3" style="background:radial-gradient(circle at 50% 50%,#4fb8e8 0 44%,rgba(255,255,255,0) 47%) 2px 1px/13px 11px,radial-gradient(circle at 50% 50%,#2a96dc 0 40%,rgba(255,255,255,0) 43%) 8px 6px/13px 11px,radial-gradient(circle at 50% 50%,#7ad0f0 0 36%,rgba(255,255,255,0) 40%) 5px 9px/19px 17px,linear-gradient(135deg,#e4f4fc,#c4e6f6)"></i></div><div class="trl" style="left:780px">2.0</div>
<div class="tr" style="left:1061px"><i id="tr4" style="background:repeating-conic-gradient(rgba(255,255,255,.13) 0 25%,rgba(255,255,255,0) 0 50%) 0 0/7px 7px,radial-gradient(ellipse 48% 62% at 60% 80%,#2f8fe2 0,#3c9fe6 70%,rgba(60,159,230,0) 72%),linear-gradient(160deg,#63cdf0,#3fa8e8)"></i></div><div class="trl" style="left:1061px">2.0</div>
<div class="tr" style="left:1342px"><i id="tr5" style="background:radial-gradient(circle at 52% 22%,#fff 0 1px,rgba(255,255,255,0) 2.500px),radial-gradient(circle at 45% 82%,#fff 0 1px,rgba(255,255,255,0) 2.500px),linear-gradient(120deg,#2f9fe0,#55c4ec 55%,#8fdcf4)"></i></div><div class="trl" style="left:1342px">2.0</div>
<div class="tr" style="left:1624px"><i id="tr6" style="background:radial-gradient(circle at 32% 50%,#fff 0 3px,rgba(255,255,255,0) 11px),radial-gradient(circle at 78% 38%,#fff 0 1.500px,rgba(255,255,255,0) 6px),radial-gradient(circle at 70% 72%,#fff 0 1.500px,rgba(255,255,255,0) 6px),radial-gradient(circle at 12% 28%,#fff 0 1px,rgba(255,255,255,0) 4px),radial-gradient(circle at 40% 86%,#fff 0 1px,rgba(255,255,255,0) 5px),radial-gradient(circle at 55% 18%,#fff 0 1px,rgba(255,255,255,0) 4px),radial-gradient(circle at 90% 85%,#fff 0 1px,rgba(255,255,255,0) 4px),linear-gradient(120deg,#3fb4ea,#2a90dc 55%,#49bdea)"></i></div><div class="trl" style="left:1624px">2.0</div>

<div class="tr" style="left:1905px;width:20px"><i style="background:linear-gradient(135deg,#39b6ea,#1a8fd8)"></i></div>
<!-- audio track -->
<div class="abs" style="left:16px;top:878px;width:1902px;height:39px;background:linear-gradient(#f6f6f6,#ededed);border:1px solid #a9a9a9;border-right:none;border-radius:3px 0 0 3px"></div>
<svg class="abs" style="left:17px;top:879px" width="1901" height="37" viewBox="17 879 1901 37" shape-rendering="crispEdges"><path d="M24 915V914.0H26V913.6H28V912.8H30V913.1H32V912.8H34V912.4H36V912.6H38V911.9H40V911.5H42V911.0H44V911.6H46V911.1H48V911.1H50V909.9H52V909.8H54V910.3H56V908.9H58V908.6H60V908.7H62V908.5H64V908.8H66V908.6H68V907.8H70V908.0H72V907.6H74V907.3H76V907.2H78V906.4H80V906.2H82V905.4H84V905.5H86V905.1H88V905.0H90V904.5H92V904.5H94V904.4H96V890.4H98V894.9H101V891.8H103V890.5H104V896.1H106V897.3H109V890.9H110V889.5H112V888.4H113V891.6H114V887.9H116V887.5H117V888.1H119V893.8H121V889.0H124V893.4H126V901.2H127V895.5H129V896.0H130V887.9H132V892.7H133V892.8H135V897.3H136V894.2H139V887.9H140V889.5H142V892.2H144V888.4H145V894.3H146V895.8H148V889.0H150V893.8H151V894.7H152V890.7H153V892.3H155V887.9H158V890.5H160V897.3H162V887.7H163V887.7H165V893.9H166V896.8H167V889.8H169V890.8H172V896.1H174V890.9H175V887.8H176V888.6H177V899.3H178V901.6H181V890.3H184V889.9H185V889.0H186V889.5H187V888.8H189V887.8H190V892.7H193V888.9H195V889.1H198V887.8H200V899.6H202V901.7H204V889.7H205V891.6H207V894.3H208V895.6H210V889.2H213V894.5H214V890.3H215V888.8H216V888.2H218V890.4H219V890.8H220V887.9H221V892.5H223V889.3H225V895.3H228V887.8H230V894.2H231V889.5H234V889.5H235V893.5H238V888.4H239V890.9H240V889.7H241V888.8H244V888.2H245V894.7H247V887.6H249V893.1H250V889.3H253V890.3H254V901.6H255V889.1H258V890.7H259V889.8H261V890.8H263V895.9H265V890.4H266V887.9H269V890.9H270V890.3H271V894.7H272V891.9H273V893.4H275V887.6H276V887.6H277V895.0H279V891.0H280V889.9H283V889.2H285V897.3H288V890.4H290V889.3H292V894.5H294V895.3H296V889.5H298V887.9H299V887.6H300V888.9H301V891.9H303V899.2H304V890.3H306V893.6H308V895.6H309V887.9H311V890.7H313V890.9H314V892.5H315V894.8H318V887.9H319V890.5H322V892.4H324V887.6H326V889.4H329V890.5H330V889.4H332V890.5H334V889.7H335V888.6H336V888.2H337V888.0H338V891.9H339V901.0H341V890.0H343V889.9H344V899.4H345V890.9H346V889.7H347V889.9H348V889.2H349V899.3H350V889.2H352V892.4H353V890.7H354V888.0H355V890.2H358V889.0H359V889.6H360V887.6H361V893.5H362V890.7H365V893.8H367V891.9H368V890.7H371V888.2H373V890.3H375V892.0H376V890.4H379V893.0H381V890.2H383V890.0H384V888.6H385V898.1H386V887.7H389V889.8H390V893.3H391V888.9H392V890.0H394V887.6H396V892.6H398V887.7H400V887.5H401V895.6H402V889.0H404V891.0H406V889.8H409V890.2H411V890.8H412V888.1H414V889.6H416V889.0H418V888.6H420V894.4H422V889.8H424V891.6H427V889.7H428V888.9H430V887.7H431V887.8H434V889.2H435V896.6H436V888.0H439V887.9H440V887.9H442V888.0H443V889.8H444V889.7H446V890.2H449V888.0H451V888.3H452V888.6H453V888.8H455V890.0H456V889.7H459V892.6H460V890.6H463V887.5H464V889.7H465V892.8H466V888.1H467V888.8H468V888.7H470V890.4H472V889.1H473V890.2H475V888.4H477V889.8H478V894.0H480V888.1H483V887.8H486V896.5H487V890.4H489V895.0H491V895.6H492V897.8H494V888.6H497V894.5H498V887.9H499V889.6H502V889.0H505V888.3H506V888.4H509V887.6H510V888.9H513V888.8H514V890.4H516V891.9H518V888.5H520V891.8H521V890.9H522V889.0H525V890.3H527V892.7H528V887.8H529V887.8H532V890.0H535V889.3H537V888.7H539V889.2H540V887.8H542V888.9H544V891.5H547V890.6H549V889.3H551V896.7H554V888.4H556V888.8H557V893.3H558V895.9H560V890.1H561V890.2H562V890.1H563V890.7H564V892.4H565V892.6H566V889.3H569V892.8H571V890.8H572V890.4H575V889.2H577V888.7H579V887.8H581V888.3H582V888.8H583V890.2H585V888.3H586V890.7H587V890.0H589V889.0H591V895.6H592V894.8H594V893.9H596V888.1H597V890.5H598V897.6H599V890.6H602V890.8H605V889.3H607V889.0H608V901.0H611V898.5H612V895.2H614V893.3H615V893.6H617V896.4H620V893.3H621V890.2H623V887.5H624V889.2H626V889.1H627V890.5H628V894.3H631V890.8H632V893.0H635V887.8H637V894.8H638V892.7H639V888.7H641V896.8H643V894.3H644V893.3H645V887.8H647V901.9H648V887.8H650V888.0H652V890.4H653V890.7H655V898.4H657V895.0H660V889.6H661V892.3H662V887.9H663V893.0H665V889.6H666V893.9H667V888.7H668V889.5H670V889.3H671V890.8H674V889.7H676V888.0H677V889.9H679V901.2H680V887.9H681V895.6H684V887.7H686V894.9H687V887.9H688V895.5H689V888.8H690V894.0H691V888.9H692V894.9H695V889.7H698V887.6H701V887.6H702V889.5H704V892.1H705V888.7H706V890.0H709V889.2H710V888.9H711V889.5H713V889.2H715V890.5H717V887.9H719V889.3H720V889.0H722V891.7H723V889.0H726V890.1H728V890.6H729V893.5H730V890.9H732V889.3H734V889.8H735V891.0H736V889.8H739V890.3H741V889.0H742V887.8H743V893.9H744V897.5H746V897.0H747V890.4H749V894.6H751V896.2H752V893.7H753V888.2H755V888.2H758V887.6H759V891.0H762V888.3H763V888.6H764V888.5H765V888.0H767V890.2H770V897.3H772V894.6H773V892.6H774V892.7H777V887.9H780V892.9H782V888.5H783V889.1H786V889.3H787V887.5H789V892.6H791V897.7H793V892.8H794V900.7H796V887.6H797V889.5H799V889.2H800V900.7H801V893.7H802V889.3H803V889.3H806V895.0H808V893.5H809V890.2H812V888.3H815V890.5H817V887.6H819V887.7H821V888.1H823V889.6H824V890.0H826V901.4H827V889.5H829V892.2H832V889.9H833V890.2H835V889.8H837V892.6H839V889.8H840V887.7H842V889.9H844V887.6H847V889.6H849V893.5H850V887.5H853V888.0H855V889.2H857V889.9H858V890.1H861V892.0H862V887.8H863V888.7H864V892.2H866V887.7H868V890.7H869V888.1H871V888.2H873V888.3H875V895.1H876V888.9H877V888.6H879V889.7H881V888.2H882V887.7H884V888.5H885V890.1H886V890.7H888V892.0H891V895.7H892V892.6H893V897.9H894V890.5H896V895.0H898V888.6H900V891.7H902V887.9H903V893.4H904V889.3H906V894.8H908V890.6H911V889.1H912V890.5H913V893.2H914V891.7H916V889.2H917V890.9H918V887.7H919V888.7H920V890.5H921V888.4H922V893.7H924V888.6H926V888.3H928V895.0H930V888.3H931V890.7H932V888.4H933V895.6H935V895.6H937V893.2H939V894.7H941V896.2H942V889.5H943V890.6H944V889.7H947V900.2H948V889.7H949V889.6H951V895.2H952V890.7H954V889.9H955V893.1H956V892.4H957V892.5H958V899.3H960V899.3H962V887.8H965V889.9H967V892.0H968V894.7H969V888.0H972V888.1H973V890.3H975V888.5H976V889.2H979V893.0H982V890.1H983V890.4H984V895.3H987V889.2H989V888.9H990V897.5H992V889.9H994V888.4H995V888.1H998V890.4H999V889.7H1001V890.4H1002V893.2H1003V894.4H1006V889.9H1007V892.7H1008V888.9H1009V887.7H1012V890.5H1015V894.8H1016V890.7H1017V888.1H1019V895.1H1020V893.3H1023V888.0H1025V889.9H1027V895.4H1029V892.0H1031V889.0H1032V891.6H1033V888.5H1035V892.5H1037V894.0H1039V896.4H1041V887.5H1042V891.0H1043V888.9H1044V890.3H1045V888.3H1047V889.7H1049V892.8H1050V889.1H1051V901.1H1054V889.9H1055V890.1H1056V898.8H1057V898.2H1058V892.6H1060V888.6H1063V890.2H1065V889.2H1066V890.6H1069V899.5H1071V894.8H1072V890.3H1074V889.1H1075V895.6H1076V888.4H1077V888.2H1078V892.9H1081V892.0H1082V888.1H1083V899.0H1084V901.7H1086V897.0H1087V887.9H1088V890.9H1089V890.2H1090V887.7H1091V888.6H1093V889.3H1094V894.4H1095V887.7H1097V890.6H1099V889.3H1102V887.9H1104V889.1H1107V890.4H1110V894.2H1112V901.5H1114V889.1H1116V896.3H1118V893.6H1119V888.6H1120V889.4H1123V887.9H1124V892.3H1126V888.0H1129V889.3H1130V901.2H1131V893.8H1134V889.4H1135V892.8H1137V892.0H1140V889.2H1142V899.0H1143V889.4H1144V888.0H1145V893.0H1146V888.3H1147V892.3H1148V900.1H1150V887.8H1152V894.3H1155V889.5H1158V890.4H1160V894.3H1163V888.2H1164V892.1H1165V887.6H1168V895.7H1169V888.6H1171V889.9H1172V890.5H1175V891.8H1177V890.4H1178V892.1H1180V888.7H1181V889.2H1184V895.4H1185V887.8H1186V890.8H1189V893.4H1191V887.7H1192V894.1H1194V888.5H1197V899.7H1200V888.0H1201V888.5H1202V890.5H1203V894.5H1205V887.8H1207V896.2H1208V888.7H1210V888.0H1211V889.1H1212V889.8H1213V890.9H1214V888.3H1216V891.0H1218V889.8H1219V889.3H1222V893.2H1224V887.8H1225V901.8H1226V890.1H1229V890.9H1230V887.9H1232V893.2H1234V890.6H1235V893.4H1236V887.9H1238V893.8H1239V897.4H1240V899.1H1243V888.4H1244V887.7H1246V888.1H1247V890.5H1248V889.3H1249V889.3H1250V890.9H1252V888.9H1255V895.1H1256V890.0H1257V894.3H1258V892.9H1260V890.5H1262V888.5H1263V892.0H1264V893.7H1266V889.5H1269V889.3H1270V888.5H1271V888.3H1274V889.2H1275V888.7H1276V901.0H1277V893.2H1278V888.3H1279V887.6H1280V888.3H1281V890.1H1284V890.9H1285V888.8H1286V889.6H1287V888.2H1288V897.1H1290V890.1H1291V888.2H1292V895.1H1294V888.8H1296V894.6H1297V888.3H1298V892.9H1299V889.7H1300V889.2H1301V889.4H1303V887.6H1304V889.5H1307V889.2H1308V890.9H1309V891.9H1310V888.8H1313V890.3H1315V894.8H1317V890.8H1318V889.4H1319V888.9H1320V889.5H1323V897.9H1324V887.9H1325V887.6H1326V888.2H1328V889.2H1331V889.3H1334V894.8H1336V888.6H1337V892.2H1338V890.3H1339V889.5H1342V889.5H1344V888.9H1346V888.3H1347V888.9H1348V891.8H1349V890.0H1350V887.7H1352V890.7H1353V887.9H1355V887.9H1356V888.0H1357V888.1H1360V892.2H1362V887.8H1363V892.4H1364V888.7H1366V889.5H1367V888.8H1368V889.6H1371V887.9H1374V899.2H1375V888.5H1376V893.7H1378V900.8H1379V893.3H1381V889.6H1383V888.1H1385V889.6H1388V891.7H1391V889.4H1392V888.8H1394V894.4H1397V888.7H1398V899.3H1399V889.8H1401V891.5H1402V888.2H1404V895.4H1405V889.8H1406V899.4H1407V890.9H1410V889.0H1412V893.9H1415V890.7H1416V892.1H1419V898.9H1420V890.6H1422V892.9H1423V892.7H1424V890.8H1425V890.8H1426V890.3H1427V890.6H1430V887.8H1431V895.6H1433V895.4H1434V888.0H1435V889.3H1436V889.8H1438V896.4H1439V890.4H1440V888.3H1442V900.6H1444V898.2H1445V894.5H1448V890.8H1450V892.2H1452V888.3H1453V894.6H1454V893.9H1456V887.6H1457V892.9H1458V888.2H1459V889.4H1460V889.3H1461V893.4H1463V888.7H1464V888.9H1465V889.8H1466V895.1H1467V889.5H1469V901.8H1472V896.2H1473V888.1H1474V895.5H1475V888.7H1476V894.7H1477V892.1H1478V895.3H1481V888.8H1484V888.0H1485V890.0H1486V897.8H1489V888.5H1490V889.5H1492V891.9H1494V891.8H1497V890.8H1498V888.1H1501V887.9H1502V890.9H1504V891.0H1506V888.2H1508V887.6H1510V887.7H1512V898.4H1513V887.6H1514V889.2H1516V896.1H1519V897.8H1520V895.3H1521V889.2H1523V888.1H1525V889.5H1526V889.6H1528V895.6H1529V889.7H1530V893.8H1533V890.8H1534V894.1H1535V888.7H1536V900.1H1539V887.9H1540V889.3H1543V889.8H1545V894.1H1547V887.7H1550V889.2H1551V891.6H1554V887.8H1556V895.2H1557V895.6H1558V893.1H1560V889.2H1561V892.9H1563V888.7H1566V889.9H1567V890.9H1569V890.3H1570V892.8H1573V893.6H1574V895.6H1577V889.8H1578V889.6H1580V889.8H1582V888.1H1583V890.5H1584V894.2H1585V889.7H1586V889.8H1587V890.2H1589V890.8H1590V888.3H1593V887.6H1596V890.9H1597V890.2H1598V893.4H1601V892.3H1603V895.0H1606V895.7H1607V895.8H1608V893.6H1610V892.8H1611V887.7H1613V889.4H1614V889.3H1616V894.1H1617V888.9H1618V898.1H1619V890.5H1621V888.9H1623V890.7H1624V893.4H1625V889.7H1628V889.3H1631V889.0H1632V888.2H1633V888.1H1634V889.5H1635V895.1H1636V889.1H1637V890.8H1639V890.6H1640V887.5H1641V889.0H1643V889.2H1644V895.2H1647V889.7H1648V899.4H1649V898.8H1650V890.1H1651V887.9H1654V889.2H1655V890.7H1657V892.9H1660V890.0H1661V888.9H1663V895.1H1664V892.4H1667V889.1H1670V891.6H1671V887.8H1672V890.6H1675V889.9H1677V890.2H1679V887.8H1681V894.8H1682V889.8H1684V892.8H1686V889.4H1688V894.7H1691V888.7H1692V894.3H1694V888.5H1695V889.0H1696V890.4H1698V889.6H1701V888.7H1704V888.4H1705V888.9H1708V888.0H1709V894.8H1711V894.1H1712V888.6H1714V889.2H1717V895.1H1719V887.8H1721V889.4H1722V890.8H1724V887.7H1725V894.6H1726V888.3H1729V893.1H1732V889.4H1734V888.0H1736V890.4H1737V892.3H1739V889.7H1740V888.4H1741V899.5H1743V890.5H1746V888.8H1747V895.5H1748V890.0H1749V890.3H1750V893.8H1752V892.5H1753V894.4H1755V890.6H1756V890.7H1757V889.2H1760V888.3H1762V888.3H1763V899.0H1764V900.2H1767V889.9H1768V897.9H1770V890.9H1772V888.9H1774V890.7H1775V892.7H1777V894.6H1780V888.5H1781V897.5H1783V892.8H1784V898.2H1785V888.4H1787V891.9H1788V888.6H1791V889.1H1793V888.9H1796V888.4H1798V889.4H1800V892.8H1801V900.8H1803V889.3H1805V890.4H1806V888.8H1809V899.0H1811V891.0H1812V897.5H1813V889.3H1814V897.7H1815V887.8H1816V896.9H1817V890.1H1819V890.8H1821V889.4H1823V888.1H1824V888.3H1826V893.5H1828V891.0H1830V887.5H1833V888.3H1836V892.9H1837V889.5H1838V888.1H1839V890.0H1840V896.2H1841V892.4H1844V890.6H1845V888.6H1848V890.1H1849V889.7H1850V899.4H1853V889.8H1855V888.1H1857V887.6H1859V895.6H1861V897.5H1864V892.8H1867V890.9H1870V889.9H1873V891.5H1876V888.8H1878V892.0H1880V888.8H1881V890.8H1882V888.1H1885V899.9H1887V888.3H1890V887.7H1891V887.6H1893V888.3H1894V890.1H1896V887.7H1897V892.2H1898V888.3H1899V887.8H1902V893.0H1903V888.3H1904V892.0H1905V899.1H1906V893.9H1907V888.8H1909V888.9H1912V895.9H1914V893.0H1915V890.3H1916V892.8H1918V915z" fill="#8497a5"/></svg>
<div class="abs" id="song" style="left:900.2px;top:885px;font-size:15px;line-height:20px;color:#fff;white-space:nowrap;text-shadow:0 0 2px #333,0 0 1px #222,1px 1px 1px #333;transform-origin:0 50%;transform:scaleX(0.989)">John Kelly - The Business</div>
<!-- mic track -->
<div class="abs" style="left:16px;top:922px;width:1888px;height:39px;background:linear-gradient(#f8f8f8,#e4e4e4);border:1px solid #a9a9a9;border-radius:3px"></div>
<svg class="abs" style="left:730px;top:929px" width="20" height="24" viewBox="730 929 20 24"><rect x="737" y="931" width="6.400" height="12" rx="3.200" fill="#555"/><path d="M734.200 940.500a6 6 0 0 0 12 0M740.200 946.500v4.500" fill="none" stroke="#555" stroke-width="1.700"/></svg>
<div class="abs" id="mic" style="left:759.5px;top:931px;font-size:15.500px;line-height:20px;color:#333;white-space:nowrap;transform-origin:0 50%;transform:scaleX(1.039)">Double-cliquer pour démarrer l’enregistrement par micro</div>
<!-- bottom bar -->
<div class="abs" style="left:2px;top:965px;width:1916px;height:35px;background:#f9f9f9"></div>
<div class="abs" style="left:2px;top:965px;width:135px;height:33px;background:linear-gradient(#c4c4c4,#bbb)"></div>
<svg class="abs" style="left:60px;top:965px" width="20" height="8" viewBox="0 0 20 8"><path d="M3 0h13l-6.500 6z" fill="#9b9b9b"/></svg>
<div class="abs" id="plan" style="left:9.5px;top:972px;font-size:15.500px;line-height:20px;color:#222;white-space:nowrap;-webkit-text-stroke:.35px #222;transform-origin:0 50%;transform:scaleX(1.038)">Plan de montage</div>
<div class="abs" id="chrono" style="left:162.2px;top:971px;font-size:15.500px;line-height:20px;color:#222;white-space:nowrap;transform-origin:0 50%;transform:scaleX(1.024)">Chronologie</div>
<div class="abs" style="left:308px;top:974.500px;width:1574px;height:13.500px;border-radius:7px;background:#dcdcdc"></div>
<div class="abs" style="left:308px;top:974.500px;width:762px;height:13.500px;border-radius:7px;background:#9c9c9c"></div>
<svg class="abs" style="left:282px;top:972px" width="1630" height="20" viewBox="282 972 1630 20"><path d="M296 974.500v13l-10.500-6.500z" fill="#dcdcdc"/><path d="M1894 973.800v14l11-7z" fill="#9a9a9a"/></svg>
<div class="abs" style="left:0;top:997px;width:1920px;height:3px;background:linear-gradient(#dedede,#f8f8f8)"></div>
<div class="abs" style="left:1917px;top:715px;width:3px;height:250px;background:#e6e6e6;z-index:40"></div>
<!--SECTIONS-->
</body>
</html>
